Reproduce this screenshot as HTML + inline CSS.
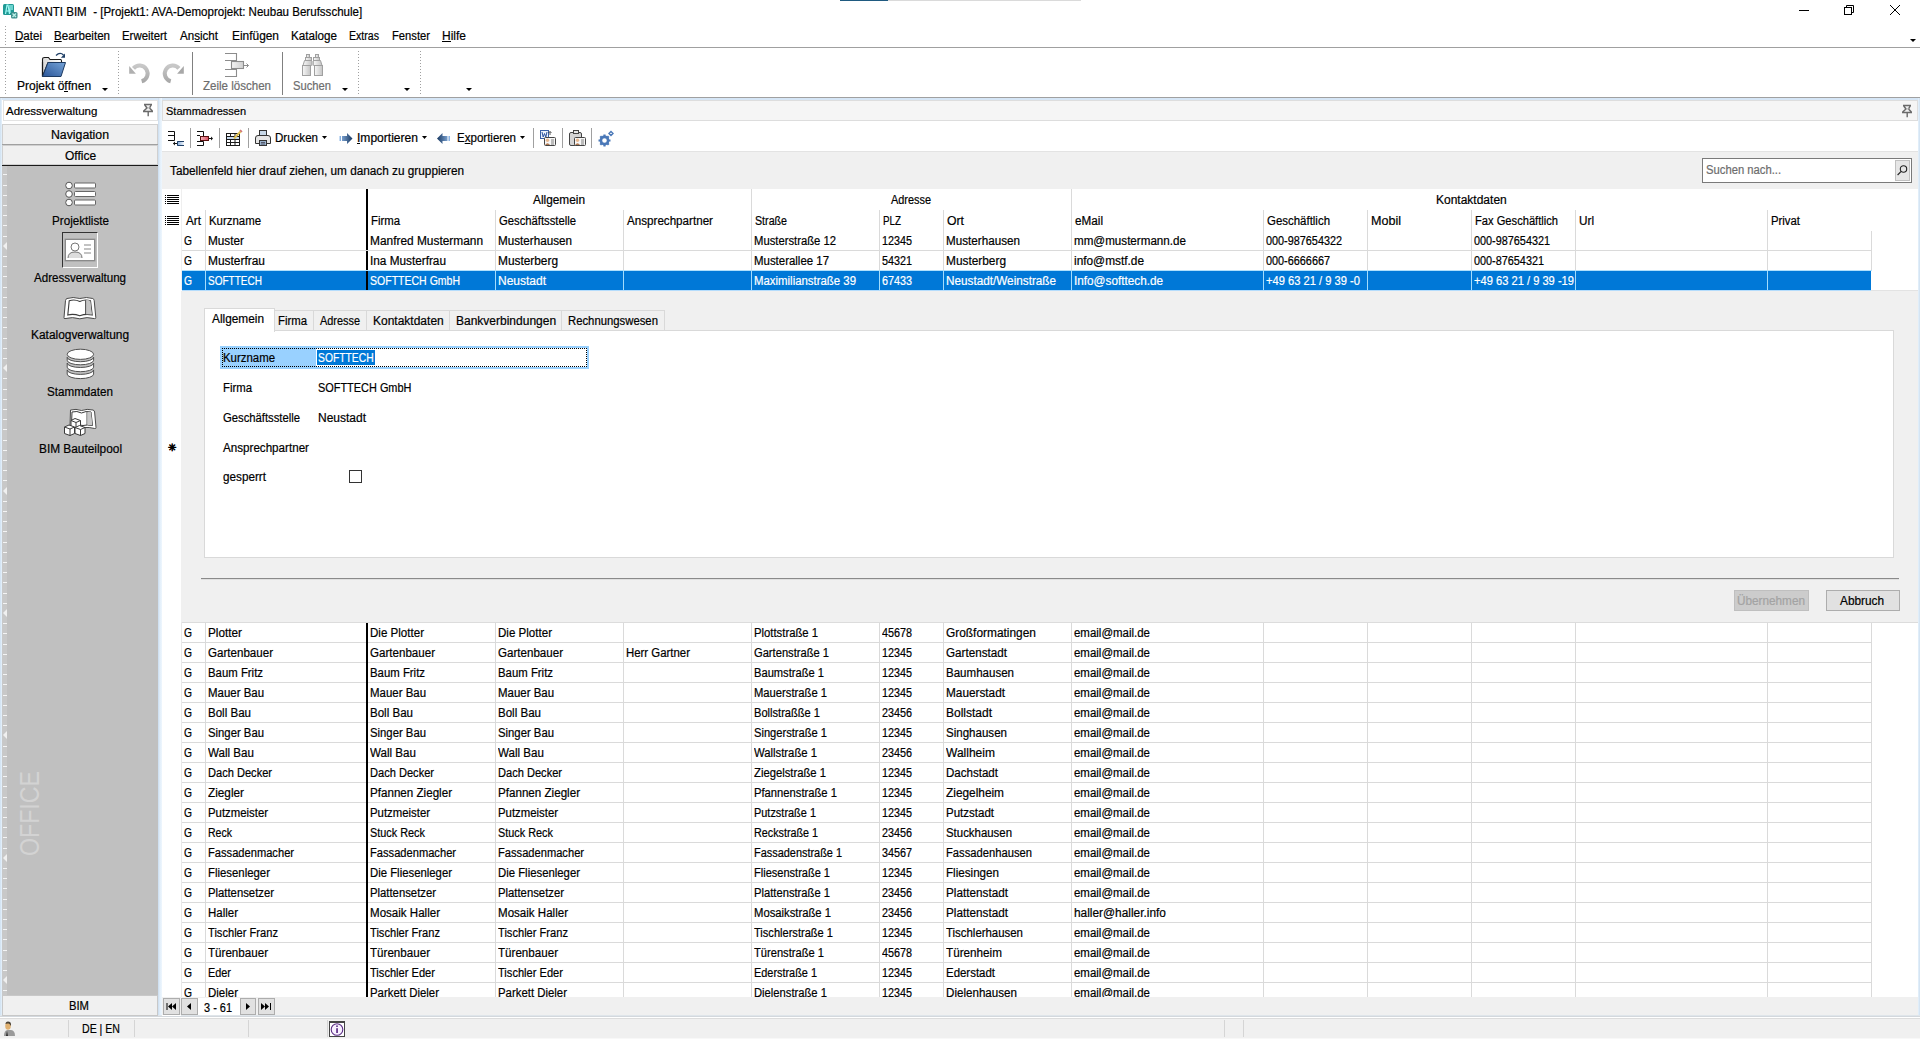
<!DOCTYPE html>
<html><head><meta charset="utf-8"><title>AVANTI BIM</title>
<style>
html,body{margin:0;padding:0;}
body{width:1920px;height:1039px;overflow:hidden;position:relative;background:#f0f0f0;font-family:"Liberation Sans",sans-serif;font-size:12px;color:#000;}
.r{position:absolute;}
.t{position:absolute;white-space:nowrap;line-height:1;-webkit-text-stroke-width:0.2px;}
.s{display:inline-block;transform-origin:0 0;}
u{text-decoration:none;position:relative;}
u::after{content:"";position:absolute;left:0;right:0;top:12px;height:1px;background:currentColor;}
</style></head><body>
<div class="r" style="left:0px;top:0px;width:1920px;height:98px;background:#fff;"></div>
<div class="r" style="left:0px;top:98px;width:1920px;height:2px;background:#d6e6f6;"></div>
<div class="r" style="left:0px;top:98px;width:2px;height:920px;background:linear-gradient(90deg,#cfe0f0,#e6f2fc);"></div>
<div class="r" style="left:158px;top:98px;width:4px;height:920px;background:linear-gradient(90deg,#cadcee,#e3effa 50%,#eef6fd);"></div>
<div class="r" style="left:1918px;top:98px;width:2px;height:920px;background:linear-gradient(90deg,#e6f2fc,#cfe0f0);"></div>
<div class="r" style="left:0px;top:1015px;width:1920px;height:1px;background:#dfe5ea;"></div>
<div class="r" style="left:840px;top:0px;width:48px;height:1px;background:#1f5a80;"></div>
<div class="r" style="left:888px;top:0px;width:193px;height:1px;background:#dadada;"></div>
<svg class="r" style="left:0px;top:0px" width="20" height="20" viewBox="0 0 20 20"><rect x="3" y="4" width="11" height="11" rx="1.5" fill="#1f9994"/><path d="M5.5 14L7 5H8L9.5 14M6 11H9M10 5V13M12 5V10" fill="none" stroke="#9ff8f4" stroke-width="1.2"/><rect x="11" y="12" width="6.5" height="6.5" rx="1.5" fill="#3f8f8c"/><path d="M12.5 13.5L16 17M16 13.5L12.5 17" stroke="#b8eee6" stroke-width="1.4"/></svg>
<div class="t" style="left:23px;top:6px;font-size:12px;color:#000;"><span class="s" style="transform:scaleX(0.962)">AVANTI BIM&nbsp; - [Projekt1: AVA-Demoprojekt: Neubau Berufsschule]</span></div>
<div class="r" style="left:1799px;top:10px;width:10px;height:1px;background:#000;"></div>
<svg class="r" style="left:1843px;top:4px" width="12" height="12" viewBox="0 0 12 12"><rect x="1.5" y="3.5" width="7" height="7" fill="none" stroke="#000" stroke-width="1"/><path d="M3.5 3.5V1.5H10.5V8.5H8.5" fill="none" stroke="#000" stroke-width="1"/></svg>
<svg class="r" style="left:1889px;top:4px" width="12" height="12" viewBox="0 0 12 12"><path d="M1 1L11 11M11 1L1 11" stroke="#000" stroke-width="1"/></svg>
<div class="r" style="left:5px;top:26px;width:1px;height:1px;background:#a0a0a0;"></div>
<div class="r" style="left:5px;top:29px;width:1px;height:1px;background:#a0a0a0;"></div>
<div class="r" style="left:5px;top:32px;width:1px;height:1px;background:#a0a0a0;"></div>
<div class="r" style="left:5px;top:35px;width:1px;height:1px;background:#a0a0a0;"></div>
<div class="r" style="left:5px;top:38px;width:1px;height:1px;background:#a0a0a0;"></div>
<div class="r" style="left:5px;top:41px;width:1px;height:1px;background:#a0a0a0;"></div>
<div class="r" style="left:5px;top:44px;width:1px;height:1px;background:#a0a0a0;"></div>
<div class="t" style="left:15px;top:30px;font-size:12px;color:#000;"><span class="s" style="transform:scaleX(0.964)"><u>D</u>atei</span></div>
<div class="t" style="left:54px;top:30px;font-size:12px;color:#000;"><span class="s" style="transform:scaleX(0.965)"><u>B</u>earbeiten</span></div>
<div class="t" style="left:122px;top:30px;font-size:12px;color:#000;"><span class="s" style="transform:scaleX(0.950)">Erweitert</span></div>
<div class="t" style="left:180px;top:30px;font-size:12px;color:#000;"><span class="s" style="transform:scaleX(0.966)">An<u>s</u>icht</span></div>
<div class="t" style="left:232px;top:30px;font-size:12px;color:#000;"><span class="s" style="transform:scaleX(0.992)">Einfügen</span></div>
<div class="t" style="left:291px;top:30px;font-size:12px;color:#000;"><span class="s" style="transform:scaleX(0.971)">Kataloge</span></div>
<div class="t" style="left:349px;top:30px;font-size:12px;color:#000;"><span class="s" style="transform:scaleX(0.882)">Extras</span></div>
<div class="t" style="left:392px;top:30px;font-size:12px;color:#000;"><span class="s" style="transform:scaleX(0.934)">Fenster</span></div>
<div class="t" style="left:442px;top:30px;font-size:12px;color:#000;"><u>H</u>ilfe</div>
<div class="r" style="left:0px;top:47px;width:1920px;height:1px;background:#a0a0a0;"></div>
<svg class="r" style="left:1910px;top:39px" width="7" height="5" viewBox="0 0 7 5"><path d="M0 0H6L3 3Z" fill="#000"/></svg>
<div class="r" style="left:0px;top:97px;width:1920px;height:1px;background:#a0a0a0;"></div>
<div class="r" style="left:5px;top:51px;width:1px;height:1px;background:#a0a0a0;"></div>
<div class="r" style="left:5px;top:54px;width:1px;height:1px;background:#a0a0a0;"></div>
<div class="r" style="left:5px;top:57px;width:1px;height:1px;background:#a0a0a0;"></div>
<div class="r" style="left:5px;top:60px;width:1px;height:1px;background:#a0a0a0;"></div>
<div class="r" style="left:5px;top:63px;width:1px;height:1px;background:#a0a0a0;"></div>
<div class="r" style="left:5px;top:66px;width:1px;height:1px;background:#a0a0a0;"></div>
<div class="r" style="left:5px;top:69px;width:1px;height:1px;background:#a0a0a0;"></div>
<div class="r" style="left:5px;top:72px;width:1px;height:1px;background:#a0a0a0;"></div>
<div class="r" style="left:5px;top:75px;width:1px;height:1px;background:#a0a0a0;"></div>
<div class="r" style="left:5px;top:78px;width:1px;height:1px;background:#a0a0a0;"></div>
<div class="r" style="left:5px;top:81px;width:1px;height:1px;background:#a0a0a0;"></div>
<div class="r" style="left:5px;top:84px;width:1px;height:1px;background:#a0a0a0;"></div>
<div class="r" style="left:5px;top:87px;width:1px;height:1px;background:#a0a0a0;"></div>
<div class="r" style="left:5px;top:90px;width:1px;height:1px;background:#a0a0a0;"></div>
<div class="r" style="left:5px;top:93px;width:1px;height:1px;background:#a0a0a0;"></div>
<svg class="r" style="left:36px;top:48px" width="40" height="32" viewBox="0 0 40 32"><defs><linearGradient id="fg1" x1="0" y1="1" x2="1" y2="0"><stop offset="0" stop-color="#2a5598"/><stop offset="1" stop-color="#76a4d8"/></linearGradient><linearGradient id="fg2" x1="0" x2="1"><stop offset="0" stop-color="#d8d8d8"/><stop offset="1" stop-color="#ffffff"/></linearGradient></defs><path d="M6.5 28.5V11Q6.5 9.5 8.5 9.5H12.5L14 11.5H24.5Q25.5 11.5 25.5 13V14.5H12Z" fill="url(#fg2)" stroke="#1a1a1a" stroke-width="1.1"/><path d="M6.5 14V28.5" stroke="#1a1a1a" stroke-width="1.2"/><path d="M12 14.5H29.5L25 28.5H6.5Z" fill="url(#fg1)" stroke="#1d3a62" stroke-width="1"/><path d="M20 7.5Q24 3.5 27.5 7" fill="none" stroke="#1f3f66" stroke-width="1.3"/><path d="M29 5.5V9.8H24.8Z" fill="#1f3f66"/></svg>
<div class="t" style="left:17px;top:80px;font-size:12px;color:#000;">Projekt ö<u>f</u>fnen</div>
<svg class="r" style="left:102px;top:88px" width="7" height="5" viewBox="0 0 7 5"><path d="M0 0H6L3 3Z" fill="#000"/></svg>
<div class="r" style="left:118px;top:51px;width:1px;height:1px;background:#a0a0a0;"></div>
<div class="r" style="left:118px;top:54px;width:1px;height:1px;background:#a0a0a0;"></div>
<div class="r" style="left:118px;top:57px;width:1px;height:1px;background:#a0a0a0;"></div>
<div class="r" style="left:118px;top:60px;width:1px;height:1px;background:#a0a0a0;"></div>
<div class="r" style="left:118px;top:63px;width:1px;height:1px;background:#a0a0a0;"></div>
<div class="r" style="left:118px;top:66px;width:1px;height:1px;background:#a0a0a0;"></div>
<div class="r" style="left:118px;top:69px;width:1px;height:1px;background:#a0a0a0;"></div>
<div class="r" style="left:118px;top:72px;width:1px;height:1px;background:#a0a0a0;"></div>
<div class="r" style="left:118px;top:75px;width:1px;height:1px;background:#a0a0a0;"></div>
<div class="r" style="left:118px;top:78px;width:1px;height:1px;background:#a0a0a0;"></div>
<div class="r" style="left:118px;top:81px;width:1px;height:1px;background:#a0a0a0;"></div>
<div class="r" style="left:118px;top:84px;width:1px;height:1px;background:#a0a0a0;"></div>
<div class="r" style="left:118px;top:87px;width:1px;height:1px;background:#a0a0a0;"></div>
<div class="r" style="left:118px;top:90px;width:1px;height:1px;background:#a0a0a0;"></div>
<div class="r" style="left:118px;top:93px;width:1px;height:1px;background:#a0a0a0;"></div>
<svg class="r" style="left:124px;top:58px" width="66" height="32" viewBox="0 0 66 32"><defs><linearGradient id="ug" x1="0" y1="0" x2="0" y2="1"><stop offset="0" stop-color="#c8c8c8"/><stop offset="1" stop-color="#a9a9a9"/></linearGradient></defs><path d="M9.47 10.36A8 8 0 1 1 17.67 23.23" fill="none" stroke="url(#ug)" stroke-width="4"/><path d="M5.2 8.1V15.8H11.9Z" fill="#b0b0b0"/><path d="M54.93 10.36A8 8 0 1 0 46.73 23.23" fill="none" stroke="url(#ug)" stroke-width="4"/><path d="M59.8 8.1V15.8H53.1Z" fill="#a8a8a8"/></svg>
<div class="r" style="left:192px;top:52px;width:1px;height:43px;background:#808080;"></div>
<svg class="r" style="left:218px;top:50px" width="40" height="30" viewBox="0 0 40 30"><defs><linearGradient id="zg" x1="0" x2="1"><stop offset="0" stop-color="#f4f4f4"/><stop offset="1" stop-color="#cfcfcf"/></linearGradient></defs><path d="M7 3.5H18.5V10.5H7M7 19.5H18.5V26.5H7" fill="none" stroke="#8c8c8c" stroke-width="1.1"/><rect x="13.5" y="11.5" width="12" height="7" fill="url(#zg)" stroke="#8c8c8c" stroke-width="1.1"/><path d="M26 15.5H30.5M28.5 13.5L30.5 15.5L28.5 17.5" fill="none" stroke="#8c8c8c" stroke-width="1"/></svg>
<div class="t" style="left:203px;top:80px;font-size:12px;color:#6d6d6d;"><span class="s" style="transform:scaleX(0.962)">Zeile löschen</span></div>
<div class="r" style="left:282px;top:52px;width:1px;height:43px;background:#808080;"></div>
<svg class="r" style="left:296px;top:50px" width="32" height="30" viewBox="0 0 32 30"><defs><linearGradient id="bn" x1="0" x2="1"><stop offset="0" stop-color="#f8f8f8"/><stop offset="1" stop-color="#c4c4c4"/></linearGradient></defs><g fill="url(#bn)" stroke="#a0a0a0" stroke-width="1"><rect x="6.5" y="15.5" width="8" height="10"/><path d="M7 15.5L8.5 10.5H15.5V15.5Z"/><rect x="9.5" y="7.5" width="6" height="3"/><rect x="10.5" y="4.5" width="3" height="3"/><rect x="18.5" y="15.5" width="8" height="10"/><path d="M26 15.5L24.5 10.5H17.5V15.5Z"/><rect x="17.5" y="7.5" width="6" height="3"/><rect x="19.5" y="4.5" width="3" height="3"/></g><rect x="15.5" y="11" width="2" height="4.5" fill="#c8c8c8"/></svg>
<div class="t" style="left:293px;top:80px;font-size:12px;color:#6d6d6d;"><span class="s" style="transform:scaleX(0.934)">Suchen</span></div>
<svg class="r" style="left:342px;top:88px" width="7" height="5" viewBox="0 0 7 5"><path d="M0 0H6L3 3Z" fill="#000"/></svg>
<div class="r" style="left:358px;top:51px;width:1px;height:1px;background:#a0a0a0;"></div>
<div class="r" style="left:358px;top:54px;width:1px;height:1px;background:#a0a0a0;"></div>
<div class="r" style="left:358px;top:57px;width:1px;height:1px;background:#a0a0a0;"></div>
<div class="r" style="left:358px;top:60px;width:1px;height:1px;background:#a0a0a0;"></div>
<div class="r" style="left:358px;top:63px;width:1px;height:1px;background:#a0a0a0;"></div>
<div class="r" style="left:358px;top:66px;width:1px;height:1px;background:#a0a0a0;"></div>
<div class="r" style="left:358px;top:69px;width:1px;height:1px;background:#a0a0a0;"></div>
<div class="r" style="left:358px;top:72px;width:1px;height:1px;background:#a0a0a0;"></div>
<div class="r" style="left:358px;top:75px;width:1px;height:1px;background:#a0a0a0;"></div>
<div class="r" style="left:358px;top:78px;width:1px;height:1px;background:#a0a0a0;"></div>
<div class="r" style="left:358px;top:81px;width:1px;height:1px;background:#a0a0a0;"></div>
<div class="r" style="left:358px;top:84px;width:1px;height:1px;background:#a0a0a0;"></div>
<div class="r" style="left:358px;top:87px;width:1px;height:1px;background:#a0a0a0;"></div>
<div class="r" style="left:358px;top:90px;width:1px;height:1px;background:#a0a0a0;"></div>
<div class="r" style="left:358px;top:93px;width:1px;height:1px;background:#a0a0a0;"></div>
<svg class="r" style="left:404px;top:88px" width="7" height="5" viewBox="0 0 7 5"><path d="M0 0H6L3 3Z" fill="#000"/></svg>
<div class="r" style="left:420px;top:51px;width:1px;height:1px;background:#a0a0a0;"></div>
<div class="r" style="left:420px;top:54px;width:1px;height:1px;background:#a0a0a0;"></div>
<div class="r" style="left:420px;top:57px;width:1px;height:1px;background:#a0a0a0;"></div>
<div class="r" style="left:420px;top:60px;width:1px;height:1px;background:#a0a0a0;"></div>
<div class="r" style="left:420px;top:63px;width:1px;height:1px;background:#a0a0a0;"></div>
<div class="r" style="left:420px;top:66px;width:1px;height:1px;background:#a0a0a0;"></div>
<div class="r" style="left:420px;top:69px;width:1px;height:1px;background:#a0a0a0;"></div>
<div class="r" style="left:420px;top:72px;width:1px;height:1px;background:#a0a0a0;"></div>
<div class="r" style="left:420px;top:75px;width:1px;height:1px;background:#a0a0a0;"></div>
<div class="r" style="left:420px;top:78px;width:1px;height:1px;background:#a0a0a0;"></div>
<div class="r" style="left:420px;top:81px;width:1px;height:1px;background:#a0a0a0;"></div>
<div class="r" style="left:420px;top:84px;width:1px;height:1px;background:#a0a0a0;"></div>
<div class="r" style="left:420px;top:87px;width:1px;height:1px;background:#a0a0a0;"></div>
<div class="r" style="left:420px;top:90px;width:1px;height:1px;background:#a0a0a0;"></div>
<div class="r" style="left:420px;top:93px;width:1px;height:1px;background:#a0a0a0;"></div>
<svg class="r" style="left:466px;top:88px" width="7" height="5" viewBox="0 0 7 5"><path d="M0 0H6L3 3Z" fill="#000"/></svg>
<div class="r" style="left:2px;top:100px;width:156px;height:915px;background:#fff;"></div>
<div class="r" style="left:3px;top:100px;width:155px;height:21px;background:#fff;border:1px solid #e3e3e3;box-sizing:border-box;"></div>
<div class="t" style="left:6px;top:106px;font-size:11.5px;color:#000;">Adressverwaltung</div>
<svg class="r" style="left:141px;top:103px" width="14" height="14" viewBox="0 0 14 14"><path d="M4 2H10L8.8 5L11 8H3L5.2 5Z" fill="#f2f2f2"/><path d="M3 1.6H11M3.8 2L6 5L2.6 8M10.2 2L8.5 5L11.4 8M2 8.6H12" fill="none" stroke="#6a6a6a" stroke-width="1.5" stroke-linejoin="round"/><path d="M7.2 9V13.2" stroke="#6a6a6a" stroke-width="1.4"/><circle cx="8.5" cy="4.8" r="1" fill="#999"/></svg>
<div class="r" style="left:2px;top:124px;width:156px;height:21px;background:#f0f0f0;border:1px solid #d0d0d0;box-sizing:border-box;"></div>
<div class="r" style="left:2px;top:144px;width:156px;height:1px;background:#a0a0a0;"></div>
<div class="t" style="left:51px;top:129px;font-size:12px;color:#000;"><span class="s" style="transform:scaleX(1.023)">Navigation</span></div>
<div class="r" style="left:2px;top:145px;width:156px;height:20px;background:#f0f0f0;border:1px solid #d0d0d0;box-sizing:border-box;"></div>
<div class="r" style="left:2px;top:165px;width:156px;height:1px;background:#1a1a1a;"></div>
<div class="t" style="left:65px;top:150px;font-size:12px;color:#000;">Office</div>
<div class="r" style="left:2px;top:166px;width:156px;height:829px;background:#c0c0c0;"></div>
<div class="r" style="left:2px;top:166px;width:5px;height:829px;background:#c8c8c8;"></div>
<div class="r" style="left:3px;top:174px;width:4px;height:1px;background:#f4f4f4;"></div>
<div class="r" style="left:3px;top:185px;width:4px;height:1px;background:#f4f4f4;"></div>
<div class="r" style="left:3px;top:195px;width:4px;height:1px;background:#f4f4f4;"></div>
<div class="r" style="left:3px;top:205px;width:4px;height:1px;background:#f4f4f4;"></div>
<div class="r" style="left:3px;top:215px;width:4px;height:1px;background:#f4f4f4;"></div>
<div class="r" style="left:3px;top:225px;width:4px;height:1px;background:#f4f4f4;"></div>
<div class="r" style="left:3px;top:236px;width:4px;height:1px;background:#f4f4f4;"></div>
<svg class="r" style="left:3px;top:242px" width="5" height="9" viewBox="0 0 5 9"><path d="M4 0V8L0 4Z" fill="#f0f0f0"/></svg>
<div class="r" style="left:3px;top:256px;width:4px;height:1px;background:#f4f4f4;"></div>
<div class="r" style="left:3px;top:266px;width:4px;height:1px;background:#f4f4f4;"></div>
<div class="r" style="left:3px;top:276px;width:4px;height:1px;background:#f4f4f4;"></div>
<div class="r" style="left:3px;top:287px;width:4px;height:1px;background:#f4f4f4;"></div>
<div class="r" style="left:3px;top:297px;width:4px;height:1px;background:#f4f4f4;"></div>
<div class="r" style="left:3px;top:307px;width:4px;height:1px;background:#f4f4f4;"></div>
<div class="r" style="left:3px;top:317px;width:4px;height:1px;background:#f4f4f4;"></div>
<div class="r" style="left:3px;top:327px;width:4px;height:1px;background:#f4f4f4;"></div>
<div class="r" style="left:3px;top:338px;width:4px;height:1px;background:#f4f4f4;"></div>
<div class="r" style="left:3px;top:348px;width:4px;height:1px;background:#f4f4f4;"></div>
<div class="r" style="left:3px;top:358px;width:4px;height:1px;background:#f4f4f4;"></div>
<svg class="r" style="left:3px;top:364px" width="5" height="9" viewBox="0 0 5 9"><path d="M4 0V8L0 4Z" fill="#f0f0f0"/></svg>
<div class="r" style="left:3px;top:378px;width:4px;height:1px;background:#f4f4f4;"></div>
<div class="r" style="left:3px;top:389px;width:4px;height:1px;background:#f4f4f4;"></div>
<div class="r" style="left:3px;top:399px;width:4px;height:1px;background:#f4f4f4;"></div>
<div class="r" style="left:3px;top:409px;width:4px;height:1px;background:#f4f4f4;"></div>
<div class="r" style="left:3px;top:419px;width:4px;height:1px;background:#f4f4f4;"></div>
<div class="r" style="left:3px;top:429px;width:4px;height:1px;background:#f4f4f4;"></div>
<div class="r" style="left:3px;top:440px;width:4px;height:1px;background:#f4f4f4;"></div>
<div class="r" style="left:3px;top:450px;width:4px;height:1px;background:#f4f4f4;"></div>
<div class="r" style="left:3px;top:460px;width:4px;height:1px;background:#f4f4f4;"></div>
<div class="r" style="left:3px;top:470px;width:4px;height:1px;background:#f4f4f4;"></div>
<div class="r" style="left:3px;top:480px;width:4px;height:1px;background:#f4f4f4;"></div>
<svg class="r" style="left:3px;top:487px" width="5" height="9" viewBox="0 0 5 9"><path d="M4 0V8L0 4Z" fill="#f0f0f0"/></svg>
<div class="r" style="left:3px;top:501px;width:4px;height:1px;background:#f4f4f4;"></div>
<div class="r" style="left:3px;top:511px;width:4px;height:1px;background:#f4f4f4;"></div>
<div class="r" style="left:3px;top:521px;width:4px;height:1px;background:#f4f4f4;"></div>
<div class="r" style="left:3px;top:531px;width:4px;height:1px;background:#f4f4f4;"></div>
<div class="r" style="left:3px;top:542px;width:4px;height:1px;background:#f4f4f4;"></div>
<div class="r" style="left:3px;top:552px;width:4px;height:1px;background:#f4f4f4;"></div>
<div class="r" style="left:3px;top:562px;width:4px;height:1px;background:#f4f4f4;"></div>
<div class="r" style="left:3px;top:572px;width:4px;height:1px;background:#f4f4f4;"></div>
<div class="r" style="left:3px;top:582px;width:4px;height:1px;background:#f4f4f4;"></div>
<div class="r" style="left:3px;top:593px;width:4px;height:1px;background:#f4f4f4;"></div>
<div class="r" style="left:3px;top:603px;width:4px;height:1px;background:#f4f4f4;"></div>
<svg class="r" style="left:3px;top:609px" width="5" height="9" viewBox="0 0 5 9"><path d="M4 0V8L0 4Z" fill="#f0f0f0"/></svg>
<div class="r" style="left:3px;top:623px;width:4px;height:1px;background:#f4f4f4;"></div>
<div class="r" style="left:3px;top:633px;width:4px;height:1px;background:#f4f4f4;"></div>
<div class="r" style="left:3px;top:644px;width:4px;height:1px;background:#f4f4f4;"></div>
<div class="r" style="left:3px;top:654px;width:4px;height:1px;background:#f4f4f4;"></div>
<div class="r" style="left:3px;top:664px;width:4px;height:1px;background:#f4f4f4;"></div>
<div class="r" style="left:3px;top:674px;width:4px;height:1px;background:#f4f4f4;"></div>
<div class="r" style="left:3px;top:684px;width:4px;height:1px;background:#f4f4f4;"></div>
<div class="r" style="left:3px;top:695px;width:4px;height:1px;background:#f4f4f4;"></div>
<div class="r" style="left:3px;top:705px;width:4px;height:1px;background:#f4f4f4;"></div>
<div class="r" style="left:3px;top:715px;width:4px;height:1px;background:#f4f4f4;"></div>
<div class="r" style="left:3px;top:725px;width:4px;height:1px;background:#f4f4f4;"></div>
<svg class="r" style="left:3px;top:731px" width="5" height="9" viewBox="0 0 5 9"><path d="M4 0V8L0 4Z" fill="#f0f0f0"/></svg>
<div class="r" style="left:3px;top:746px;width:4px;height:1px;background:#f4f4f4;"></div>
<div class="r" style="left:3px;top:756px;width:4px;height:1px;background:#f4f4f4;"></div>
<div class="r" style="left:3px;top:766px;width:4px;height:1px;background:#f4f4f4;"></div>
<div class="r" style="left:3px;top:776px;width:4px;height:1px;background:#f4f4f4;"></div>
<div class="r" style="left:3px;top:786px;width:4px;height:1px;background:#f4f4f4;"></div>
<div class="r" style="left:3px;top:797px;width:4px;height:1px;background:#f4f4f4;"></div>
<div class="r" style="left:3px;top:807px;width:4px;height:1px;background:#f4f4f4;"></div>
<div class="r" style="left:3px;top:817px;width:4px;height:1px;background:#f4f4f4;"></div>
<div class="r" style="left:3px;top:827px;width:4px;height:1px;background:#f4f4f4;"></div>
<div class="r" style="left:3px;top:837px;width:4px;height:1px;background:#f4f4f4;"></div>
<div class="r" style="left:3px;top:848px;width:4px;height:1px;background:#f4f4f4;"></div>
<svg class="r" style="left:3px;top:854px" width="5" height="9" viewBox="0 0 5 9"><path d="M4 0V8L0 4Z" fill="#f0f0f0"/></svg>
<div class="r" style="left:3px;top:868px;width:4px;height:1px;background:#f4f4f4;"></div>
<div class="r" style="left:3px;top:878px;width:4px;height:1px;background:#f4f4f4;"></div>
<div class="r" style="left:3px;top:888px;width:4px;height:1px;background:#f4f4f4;"></div>
<div class="r" style="left:3px;top:899px;width:4px;height:1px;background:#f4f4f4;"></div>
<div class="r" style="left:3px;top:909px;width:4px;height:1px;background:#f4f4f4;"></div>
<div class="r" style="left:3px;top:919px;width:4px;height:1px;background:#f4f4f4;"></div>
<div class="r" style="left:3px;top:929px;width:4px;height:1px;background:#f4f4f4;"></div>
<div class="r" style="left:3px;top:939px;width:4px;height:1px;background:#f4f4f4;"></div>
<div class="r" style="left:3px;top:950px;width:4px;height:1px;background:#f4f4f4;"></div>
<div class="r" style="left:3px;top:960px;width:4px;height:1px;background:#f4f4f4;"></div>
<div class="r" style="left:3px;top:970px;width:4px;height:1px;background:#f4f4f4;"></div>
<svg class="r" style="left:3px;top:976px" width="5" height="9" viewBox="0 0 5 9"><path d="M4 0V8L0 4Z" fill="#f0f0f0"/></svg>
<div class="r" style="left:3px;top:990px;width:4px;height:1px;background:#f4f4f4;"></div>
<div class="t" style="left:-19px;top:800px;width:99px;height:27px;font-size:27px;color:#d3d3d3;transform:rotate(-90deg) scaleX(0.86);transform-origin:50% 50%;-webkit-text-stroke-width:0;">OFFICE</div>
<svg class="r" style="left:64px;top:181px" width="34" height="26" viewBox="0 0 34 26"><circle cx="5" cy="4.5" r="3.3" fill="#fff" stroke="#555" stroke-width="1"/><rect x="10.5" y="2.0" width="21" height="5" rx="1" fill="#fff" stroke="#666" stroke-width="1"/><circle cx="5" cy="13" r="3.3" fill="#fff" stroke="#555" stroke-width="1"/><rect x="10.5" y="10.5" width="21" height="5" rx="1" fill="#fff" stroke="#666" stroke-width="1"/><circle cx="5" cy="21.5" r="3.3" fill="#fff" stroke="#555" stroke-width="1"/><rect x="10.5" y="19.0" width="21" height="5" rx="1" fill="#fff" stroke="#666" stroke-width="1"/></svg>
<div class="t" style="left:52px;top:215px;font-size:12px;color:#000;"><span class="s" style="transform:scaleX(0.971)">Projektliste</span></div>
<div class="r" style="left:62px;top:232px;width:36px;height:36px;background:#c0c0c0;border-top:1px solid #333;border-left:1px solid #333;border-bottom:1px solid #fff;border-right:1px solid #fff;box-sizing:border-box;"></div>
<svg class="r" style="left:64px;top:238px" width="32" height="25" viewBox="0 0 32 25"><rect x="0.5" y="0.5" width="31" height="23" fill="#9a9a9a"/><rect x="1.5" y="1.5" width="29" height="21" fill="#fff" stroke="#8a8a8a"/><circle cx="11" cy="9" r="4" fill="#fff" stroke="#777"/><path d="M4 20q0-6 7-6t7 6" fill="#ddd" stroke="#777"/><path d="M20 7H27M20 11H27M20 15H27" stroke="#888" stroke-width="1.2"/></svg>
<div class="t" style="left:34px;top:272px;font-size:12px;color:#000;"><span class="s" style="transform:scaleX(0.965)">Adressverwaltung</span></div>
<svg class="r" style="left:56px;top:290px" width="48" height="32" viewBox="0 0 48 32"><path d="M11 8.5Q17 6.5 23.8 8.5Q30.5 6.5 36.8 8.5Q38 9 38.2 10.5L39.8 27.5Q40 28.8 38.5 28.6Q31 26.5 23.8 28.8Q16.5 26.5 9 28.6Q7.7 28.8 8 27.5L9.5 10.5Q9.7 9 11 8.5Z" fill="#fff" stroke="#4a4a4a" stroke-width="1"/><path d="M13.2 10.8Q18.5 8.8 23.8 11.5Q29 8.8 34.5 10.8L36.2 25Q30 23.5 23.8 25.8Q17.5 23.5 11.8 25Z" fill="#fff" stroke="#3a3a3a" stroke-width="1.1"/><path d="M29.8 10.3Q32 9.7 34.3 11L35.9 24.6Q33 24 30 24.2Z" fill="#c4c4c4"/><path d="M29.6 10.2V24.3" stroke="#4a4a4a" stroke-width="1"/></svg>
<div class="t" style="left:31px;top:329px;font-size:12px;color:#000;"><span class="s" style="transform:scaleX(0.993)">Katalogverwaltung</span></div>
<svg class="r" style="left:56px;top:344px" width="48" height="40" viewBox="0 0 48 40"><path d="M11.2 25.9 A13.2 4.5 0 0 0 37.6 25.9 L37.6 30.1 A13.2 4.5 0 0 1 11.2 30.1 Z" fill="#fff" stroke="#505050" stroke-width="1"/><path d="M11.2 19.0 A13.2 4.5 0 0 0 37.6 19.0 L37.6 23.2 A13.2 4.5 0 0 1 11.2 23.2 Z" fill="#fff" stroke="#505050" stroke-width="1"/><path d="M11.2 13.2 A13.2 4.5 0 0 0 37.6 13.2 L37.6 16.3 A13.2 4.5 0 0 1 11.2 16.3 Z" fill="#fff" stroke="#505050" stroke-width="1"/><ellipse cx="24.4" cy="10.3" rx="13.2" ry="5.1" fill="#fff" stroke="#505050" stroke-width="1"/></svg>
<div class="t" style="left:47px;top:386px;font-size:12px;color:#000;"><span class="s" style="transform:scaleX(0.970)">Stammdaten</span></div>
<svg class="r" style="left:56px;top:402px" width="48" height="40" viewBox="0 0 48 40"><path d="M14.5 8Q20 6.5 25.5 8.5Q31 6.5 37 8Q38.5 8.5 38.6 10L40 25.5Q40.2 26.8 38.7 26.5Q33 25 28 25.5L14 24Z" fill="#fff" stroke="#4a4a4a" stroke-width="1"/><path d="M16 10Q21 8.5 25.5 11Q30 8.5 35 10L36.5 23.5Q31 22.5 27 23.5L15.5 22Z" fill="#fff" stroke="#3a3a3a" stroke-width="1"/><path d="M31 10V23" stroke="#4a4a4a"/><path d="M31.5 10.2Q33.5 9.7 35 10.3L36.3 23.2Q34 22.8 31.5 23Z" fill="#c8c8c8"/><g fill="#fff" stroke="#3a3a3a" stroke-width="1" stroke-linejoin="round"><path d="M15 18.5L19 16.5L24.5 18.5V25L20 27L15 25Z"/><path d="M15 18.5L20 20.5L24.5 18.5M20 20.5V27" fill="none"/><path d="M8.5 25L13 23L18.5 25V31.5L14 33.5L8.5 31.5Z"/><path d="M8.5 25L14 27L18.5 25M14 27V33.5" fill="none"/><path d="M19 25.5L23.5 23.5L29 25.5V31.5L24.5 33.5L19 31.5Z"/><path d="M19 25.5L24.5 27.5L29 25.5M24.5 27.5V33.5" fill="none"/></g></svg>
<div class="t" style="left:39px;top:443px;font-size:12px;color:#000;"><span class="s" style="transform:scaleX(0.988)">BIM Bauteilpool</span></div>
<div class="r" style="left:2px;top:995px;width:156px;height:21px;background:#f0f0f0;border:1px solid #c8c8c8;box-sizing:border-box;"></div>
<div class="t" style="left:69px;top:1000px;font-size:12px;color:#000;"><span class="s" style="transform:scaleX(0.937)">BIM</span></div>
<div class="r" style="left:162px;top:100px;width:1756px;height:915px;background:#f0f0f0;"></div>
<div class="r" style="left:162px;top:100px;width:1756px;height:21px;background:#f5f5f5;border:1px solid #dddddd;box-sizing:border-box;"></div>
<div class="t" style="left:166px;top:106px;font-size:11px;color:#000;">Stammadressen</div>
<svg class="r" style="left:1900px;top:104px" width="14" height="14" viewBox="0 0 14 14"><path d="M4 2H10L8.8 5L11 8H3L5.2 5Z" fill="#f2f2f2"/><path d="M3 1.6H11M3.8 2L6 5L2.6 8M10.2 2L8.5 5L11.4 8M2 8.6H12" fill="none" stroke="#6a6a6a" stroke-width="1.5" stroke-linejoin="round"/><path d="M7.2 9V13.2" stroke="#6a6a6a" stroke-width="1.4"/><circle cx="8.5" cy="4.8" r="1" fill="#999"/></svg>
<div class="r" style="left:162px;top:121px;width:1756px;height:30px;background:#fff;"></div>
<div class="r" style="left:162px;top:151px;width:1756px;height:1px;background:#e3e3e3;"></div>
<svg class="r" style="left:164px;top:126px" width="90" height="24" viewBox="0 0 90 24"><defs><linearGradient id="bg1" x1="0" x2="1"><stop offset="0" stop-color="#7ea6d8"/><stop offset="1" stop-color="#f4f8fc"/></linearGradient><linearGradient id="rg1" x1="0" x2="1"><stop offset="0" stop-color="#f6b8c0"/><stop offset="1" stop-color="#d84a5a"/></linearGradient></defs><path d="M4 5.5H10.5V14.5H4M4 9.5H10.5" fill="none" stroke="#111" stroke-width="1"/><rect x="13" y="15" width="7" height="5" fill="url(#bg1)"/><path d="M20 15.5H13.5V19.5H20" fill="none" stroke="#1f3f66" stroke-width="1"/><path d="M9.5 17.5H13" stroke="#111" stroke-width="1"/><path d="M9 17.5L11 15.5V19.5Z" fill="#111"/><path d="M33 5.5H39.5V10M33 9.5H36M33 15.5H39.5V19.5H33" fill="none" stroke="#111" stroke-width="1"/><rect x="36.5" y="10.5" width="8" height="4" fill="url(#rg1)" stroke="#5a1010" stroke-width="1"/><path d="M45 12.5H48" stroke="#111" stroke-width="1"/><path d="M49 12.5L47 10.5V14.5Z" fill="#111"/><g fill="none" stroke="#1a1a1a" stroke-width="1"><rect x="62.5" y="7.5" width="13" height="12"/><path d="M62.5 10.5H75.5M62.5 13.5H75.5M62.5 16.5H75.5M66.5 7.5V19.5M71 7.5V19.5"/></g><rect x="63" y="11" width="12" height="2" fill="#c8daf0"/><path d="M70 12.5L77.5 4.5" stroke="#e0c050" stroke-width="2"/><path d="M76 4L78 6" stroke="#d07080" stroke-width="1.5"/></svg>
<div class="r" style="left:190px;top:128px;width:1px;height:20px;background:#a0a0a0;"></div>
<div class="r" style="left:219px;top:128px;width:1px;height:20px;background:#a0a0a0;"></div>
<div class="r" style="left:248px;top:128px;width:1px;height:20px;background:#a0a0a0;"></div>
<svg class="r" style="left:250px;top:126px" width="110" height="24" viewBox="0 0 110 24"><defs><linearGradient id="ar1" x1="0" x2="1"><stop offset="0" stop-color="#8fb8e8"/><stop offset="1" stop-color="#16365f"/></linearGradient><linearGradient id="ar2" x1="1" x2="0"><stop offset="0" stop-color="#8fb8e8"/><stop offset="1" stop-color="#16365f"/></linearGradient></defs><rect x="9.5" y="4.5" width="7" height="6" fill="#c6d6e6" stroke="#333" stroke-width="1"/><path d="M5.5 17.5V12Q5.5 9.5 8 9.5H18Q20.5 9.5 20.5 12V17.5H16.5V14.5H9.5V17.5Z" fill="#e6e6e6" stroke="#333" stroke-width="1"/><rect x="9.5" y="14.5" width="7" height="5" fill="#9ab2cc" stroke="#333" stroke-width="1"/><path d="M11 16.5H15M11 18H15" stroke="#445" stroke-width="0.8"/><path d="M89.5 10H91V15H89.5ZM92 10H97V7L102.5 12.5L97 18V15H92Z" fill="url(#ar1)"/></svg>
<div class="t" style="left:275px;top:132px;font-size:12px;color:#000;"><span class="s" style="transform:scaleX(0.962)">Drucken</span></div>
<svg class="r" style="left:322px;top:136px" width="6" height="4" viewBox="0 0 6 4"><path d="M0 0H5L2.5 3Z" fill="#000"/></svg>
<div class="t" style="left:357px;top:132px;font-size:12px;color:#000;"><span class="s" style="transform:scaleX(1.005)"><u>I</u>mportieren</span></div>
<svg class="r" style="left:422px;top:136px" width="6" height="4" viewBox="0 0 6 4"><path d="M0 0H5L2.5 3Z" fill="#000"/></svg>
<svg class="r" style="left:430px;top:126px" width="190" height="24" viewBox="0 0 190 24"><defs><linearGradient id="ar3" x1="1" x2="0"><stop offset="0" stop-color="#8fb8e8"/><stop offset="1" stop-color="#16365f"/></linearGradient></defs><path d="M20 10H18.5V15H20ZM17.5 10H12.5V7L7 12.5L12.5 18V15H17.5Z" fill="url(#ar3)"/><rect x="110.5" y="4.5" width="8" height="8" fill="#eef3fb" stroke="#3b62a8" stroke-width="1"/><path d="M112 6L113.2 11L114.5 7.5L115.8 11L117 6" fill="none" stroke="#2a52a0" stroke-width="1"/><path d="M120 9V5.5M118.5 7L120 5.5L121.5 7" fill="none" stroke="#333" stroke-width="0.8"/><rect x="114.5" y="11.5" width="11" height="8" rx="1" fill="#f6f6f6" stroke="#444" stroke-width="1"/><circle cx="117.5" cy="14.3" r="1.7" fill="#e8b890"/><path d="M115 19Q117.5 15.5 120 19Z" fill="#b07850"/><path d="M121 14H124M121 16H124M121 18H124" stroke="#666" stroke-width="0.8"/><rect x="139.5" y="6.5" width="12" height="13" rx="1.5" fill="#d4d4d4" stroke="#444" stroke-width="1"/><rect x="143.5" y="4.5" width="5" height="3" fill="#e6e6e6" stroke="#444" stroke-width="1"/><rect x="144.5" y="11.5" width="11" height="8" rx="1" fill="#f6f6f6" stroke="#444" stroke-width="1"/><circle cx="147.5" cy="14.3" r="1.7" fill="#e8b890"/><path d="M145 19Q147.5 15.5 150 19Z" fill="#b07850"/><path d="M151 14H154M151 16H154M151 18H154" stroke="#666" stroke-width="0.8"/><g transform="translate(174.5 14.5)"><circle r="3.6" fill="none" stroke="#4a78b8" stroke-width="2.6"/><path d="M0 -6V-4M0 4V6M-6 0H-4M4 0H6M-4.2 -4.2L-2.8 -2.8M2.8 2.8L4.2 4.2M-4.2 4.2L-2.8 2.8M2.8 -2.8L4.2 -4.2" stroke="#4a78b8" stroke-width="2.2"/></g><path d="M181 5.5L183 7.5L181 9.5L179 7.5Z" fill="none" stroke="#4a78b8" stroke-width="1.4"/></svg>
<div class="t" style="left:457px;top:132px;font-size:12px;color:#000;"><span class="s" style="transform:scaleX(0.961)">E<u>x</u>portieren</span></div>
<svg class="r" style="left:520px;top:136px" width="6" height="4" viewBox="0 0 6 4"><path d="M0 0H5L2.5 3Z" fill="#000"/></svg>
<div class="r" style="left:533px;top:128px;width:1px;height:20px;background:#a0a0a0;"></div>
<div class="r" style="left:562px;top:128px;width:1px;height:20px;background:#a0a0a0;"></div>
<div class="r" style="left:591px;top:128px;width:1px;height:20px;background:#a0a0a0;"></div>
<div class="r" style="left:162px;top:152px;width:1756px;height:37px;background:#f0f0f0;"></div>
<div class="t" style="left:170px;top:165px;font-size:12px;color:#000;"><span class="s" style="transform:scaleX(0.982)">Tabellenfeld hier drauf ziehen, um danach zu gruppieren</span></div>
<div class="r" style="left:1702px;top:158px;width:211px;height:25px;background:#fff;border:1px solid #7a7a7a;box-sizing:border-box;width:210px;"></div>
<div class="t" style="left:1706px;top:164px;font-size:12px;color:#6d6d6d;"><span class="s" style="transform:scaleX(0.937)">Suchen nach...</span></div>
<div class="r" style="left:1895px;top:160px;width:15px;height:21px;background:#e6e6e6;border:1px solid #c0c0c0;box-sizing:border-box;"></div>
<svg class="r" style="left:1896px;top:163px" width="13" height="14" viewBox="0 0 13 14"><circle cx="7.5" cy="6" r="3.2" fill="none" stroke="#222" stroke-width="1.1"/><path d="M5.2 8.4L1.6 12" stroke="#222" stroke-width="1.1"/></svg>
<div class="r" style="left:162px;top:189px;width:1756px;height:102px;background:#fff;"></div>
<div class="r" style="left:182px;top:290px;width:1736px;height:1px;background:#e3e3e3;"></div>
<div class="r" style="left:182px;top:290px;width:1689px;height:1px;background:#b4dcfc;"></div>
<div class="r" style="left:181px;top:189px;width:1px;height:101px;background:#efefef;"></div>
<div class="r" style="left:165px;top:195px;width:1px;height:1px;background:#000;"></div>
<div class="r" style="left:167px;top:195px;width:12px;height:1px;background:#000;"></div>
<div class="r" style="left:165px;top:197px;width:1px;height:1px;background:#000;"></div>
<div class="r" style="left:167px;top:197px;width:12px;height:1px;background:#000;"></div>
<div class="r" style="left:165px;top:199px;width:1px;height:1px;background:#000;"></div>
<div class="r" style="left:167px;top:199px;width:12px;height:1px;background:#000;"></div>
<div class="r" style="left:165px;top:201px;width:1px;height:1px;background:#000;"></div>
<div class="r" style="left:167px;top:201px;width:12px;height:1px;background:#000;"></div>
<div class="r" style="left:165px;top:203px;width:1px;height:1px;background:#000;"></div>
<div class="r" style="left:167px;top:203px;width:12px;height:1px;background:#000;"></div>
<div class="r" style="left:165px;top:216px;width:1px;height:1px;background:#000;"></div>
<div class="r" style="left:167px;top:216px;width:12px;height:1px;background:#000;"></div>
<div class="r" style="left:165px;top:218px;width:1px;height:1px;background:#000;"></div>
<div class="r" style="left:167px;top:218px;width:12px;height:1px;background:#000;"></div>
<div class="r" style="left:165px;top:220px;width:1px;height:1px;background:#000;"></div>
<div class="r" style="left:167px;top:220px;width:12px;height:1px;background:#000;"></div>
<div class="r" style="left:165px;top:222px;width:1px;height:1px;background:#000;"></div>
<div class="r" style="left:167px;top:222px;width:12px;height:1px;background:#000;"></div>
<div class="r" style="left:165px;top:224px;width:1px;height:1px;background:#000;"></div>
<div class="r" style="left:167px;top:224px;width:12px;height:1px;background:#000;"></div>
<div class="t" style="left:533px;top:194px;font-size:12px;color:#000;"><span class="s" style="transform:scaleX(0.987)">Allgemein</span></div>
<div class="t" style="left:891px;top:194px;font-size:12px;color:#000;"><span class="s" style="transform:scaleX(0.909)">Adresse</span></div>
<div class="t" style="left:1436px;top:194px;font-size:12px;color:#000;">Kontaktdaten</div>
<div class="t" style="left:186px;top:215px;font-size:12px;color:#000;"><span class="s" style="transform:scaleX(0.978)">Art</span></div>
<div class="t" style="left:209px;top:215px;font-size:12px;color:#000;"><span class="s" style="transform:scaleX(0.951)">Kurzname</span></div>
<div class="t" style="left:371px;top:215px;font-size:12px;color:#000;"><span class="s" style="transform:scaleX(0.946)">Firma</span></div>
<div class="t" style="left:499px;top:215px;font-size:12px;color:#000;"><span class="s" style="transform:scaleX(0.939)">Geschäftsstelle</span></div>
<div class="t" style="left:627px;top:215px;font-size:12px;color:#000;"><span class="s" style="transform:scaleX(0.969)">Ansprechpartner</span></div>
<div class="t" style="left:755px;top:215px;font-size:12px;color:#000;"><span class="s" style="transform:scaleX(0.889)">Straße</span></div>
<div class="t" style="left:883px;top:215px;font-size:12px;color:#000;"><span class="s" style="transform:scaleX(0.818)">PLZ</span></div>
<div class="t" style="left:947px;top:215px;font-size:12px;color:#000;"><span class="s" style="transform:scaleX(1.020)">Ort</span></div>
<div class="t" style="left:1075px;top:215px;font-size:12px;color:#000;"><span class="s" style="transform:scaleX(0.976)">eMail</span></div>
<div class="t" style="left:1267px;top:215px;font-size:12px;color:#000;"><span class="s" style="transform:scaleX(0.954)">Geschäftlich</span></div>
<div class="t" style="left:1371px;top:215px;font-size:12px;color:#000;"><span class="s" style="transform:scaleX(1.046)">Mobil</span></div>
<div class="t" style="left:1475px;top:215px;font-size:12px;color:#000;"><span class="s" style="transform:scaleX(0.929)">Fax Geschäftlich</span></div>
<div class="t" style="left:1579px;top:215px;font-size:12px;color:#000;"><span class="s" style="transform:scaleX(0.979)">Url</span></div>
<div class="t" style="left:1771px;top:215px;font-size:12px;color:#000;"><span class="s" style="transform:scaleX(0.945)">Privat</span></div>
<div class="r" style="left:205px;top:210px;width:1px;height:80px;background:#dadada;"></div>
<div class="r" style="left:495px;top:210px;width:1px;height:80px;background:#dadada;"></div>
<div class="r" style="left:623px;top:210px;width:1px;height:80px;background:#dadada;"></div>
<div class="r" style="left:751px;top:189px;width:1px;height:101px;background:#dadada;"></div>
<div class="r" style="left:879px;top:210px;width:1px;height:80px;background:#dadada;"></div>
<div class="r" style="left:943px;top:210px;width:1px;height:80px;background:#dadada;"></div>
<div class="r" style="left:1071px;top:189px;width:1px;height:101px;background:#dadada;"></div>
<div class="r" style="left:1263px;top:210px;width:1px;height:80px;background:#dadada;"></div>
<div class="r" style="left:1367px;top:210px;width:1px;height:80px;background:#dadada;"></div>
<div class="r" style="left:1471px;top:210px;width:1px;height:80px;background:#dadada;"></div>
<div class="r" style="left:1575px;top:210px;width:1px;height:80px;background:#dadada;"></div>
<div class="r" style="left:1767px;top:210px;width:1px;height:80px;background:#dadada;"></div>
<div class="r" style="left:1871px;top:231px;width:1px;height:59px;background:#dadada;"></div>
<div class="r" style="left:366px;top:189px;width:2px;height:101px;background:#000;"></div>
<div class="r" style="left:182px;top:250px;width:1690px;height:1px;background:#dadada;"></div>
<div class="r" style="left:182px;top:270px;width:1690px;height:1px;background:#b0e0fc;"></div>
<div class="t" style="left:184px;top:235px;width:21px;overflow:hidden;color:#000;height:14px"><span class="s" style="transform:scaleX(0.857)">G</span></div>
<div class="t" style="left:208px;top:235px;width:158px;overflow:hidden;color:#000;height:14px"><span class="s" style="transform:scaleX(0.982)">Muster</span></div>
<div class="t" style="left:370px;top:235px;width:125px;overflow:hidden;color:#000;height:14px"><span class="s" style="transform:scaleX(0.991)">Manfred Mustermann</span></div>
<div class="t" style="left:498px;top:235px;width:125px;overflow:hidden;color:#000;height:14px"><span class="s" style="transform:scaleX(0.973)">Musterhausen</span></div>
<div class="t" style="left:754px;top:235px;width:125px;overflow:hidden;color:#000;height:14px"><span class="s" style="transform:scaleX(0.939)">Musterstraße 12</span></div>
<div class="t" style="left:882px;top:235px;width:61px;overflow:hidden;color:#000;height:14px"><span class="s" style="transform:scaleX(0.899)">12345</span></div>
<div class="t" style="left:946px;top:235px;width:125px;overflow:hidden;color:#000;height:14px"><span class="s" style="transform:scaleX(0.973)">Musterhausen</span></div>
<div class="t" style="left:1074px;top:235px;width:189px;overflow:hidden;color:#000;height:14px"><span class="s" style="transform:scaleX(0.969)">mm@mustermann.de</span></div>
<div class="t" style="left:1266px;top:235px;width:101px;overflow:hidden;color:#000;height:14px"><span class="s" style="transform:scaleX(0.904)">000-987654322</span></div>
<div class="t" style="left:1474px;top:235px;width:101px;overflow:hidden;color:#000;height:14px"><span class="s" style="transform:scaleX(0.904)">000-987654321</span></div>
<div class="t" style="left:184px;top:255px;width:21px;overflow:hidden;color:#000;height:14px"><span class="s" style="transform:scaleX(0.857)">G</span></div>
<div class="t" style="left:208px;top:255px;width:158px;overflow:hidden;color:#000;height:14px"><span class="s" style="transform:scaleX(0.994)">Musterfrau</span></div>
<div class="t" style="left:370px;top:255px;width:125px;overflow:hidden;color:#000;height:14px"><span class="s" style="transform:scaleX(0.982)">Ina Musterfrau</span></div>
<div class="t" style="left:498px;top:255px;width:125px;overflow:hidden;color:#000;height:14px"><span class="s" style="transform:scaleX(0.989)">Musterberg</span></div>
<div class="t" style="left:754px;top:255px;width:125px;overflow:hidden;color:#000;height:14px"><span class="s" style="transform:scaleX(0.953)">Musterallee 17</span></div>
<div class="t" style="left:882px;top:255px;width:61px;overflow:hidden;color:#000;height:14px"><span class="s" style="transform:scaleX(0.899)">54321</span></div>
<div class="t" style="left:946px;top:255px;width:125px;overflow:hidden;color:#000;height:14px"><span class="s" style="transform:scaleX(0.989)">Musterberg</span></div>
<div class="t" style="left:1074px;top:255px;width:189px;overflow:hidden;color:#000;height:14px"><span class="s" style="transform:scaleX(0.988)">info@mstf.de</span></div>
<div class="t" style="left:1266px;top:255px;width:101px;overflow:hidden;color:#000;height:14px"><span class="s" style="transform:scaleX(0.905)">000-6666667</span></div>
<div class="t" style="left:1474px;top:255px;width:101px;overflow:hidden;color:#000;height:14px"><span class="s" style="transform:scaleX(0.904)">000-87654321</span></div>
<div class="r" style="left:182px;top:271px;width:1689px;height:19px;background:#0078d7;"></div>
<div class="t" style="left:184px;top:275px;width:21px;overflow:hidden;color:#fff;height:14px"><span class="s" style="transform:scaleX(0.857)">G</span></div>
<div class="t" style="left:208px;top:275px;width:158px;overflow:hidden;color:#fff;height:14px"><span class="s" style="transform:scaleX(0.835)">SOFTTECH</span></div>
<div class="t" style="left:370px;top:275px;width:125px;overflow:hidden;color:#fff;height:14px"><span class="s" style="transform:scaleX(0.877)">SOFTTECH GmbH</span></div>
<div class="t" style="left:498px;top:275px;width:125px;overflow:hidden;color:#fff;height:14px">Neustadt</div>
<div class="t" style="left:754px;top:275px;width:125px;overflow:hidden;color:#fff;height:14px"><span class="s" style="transform:scaleX(0.950)">Maximilianstraße 39</span></div>
<div class="t" style="left:882px;top:275px;width:61px;overflow:hidden;color:#fff;height:14px"><span class="s" style="transform:scaleX(0.899)">67433</span></div>
<div class="t" style="left:946px;top:275px;width:125px;overflow:hidden;color:#fff;height:14px"><span class="s" style="transform:scaleX(0.978)">Neustadt/Weinstraße</span></div>
<div class="t" style="left:1074px;top:275px;width:189px;overflow:hidden;color:#fff;height:14px"><span class="s" style="transform:scaleX(0.979)">Info@softtech.de</span></div>
<div class="t" style="left:1266px;top:275px;width:101px;overflow:hidden;color:#fff;height:14px"><span class="s" style="transform:scaleX(0.930)">+49 63 21 / 9 39 -0</span></div>
<div class="t" style="left:1474px;top:275px;width:101px;overflow:hidden;color:#fff;height:14px"><span class="s" style="transform:scaleX(0.928)">+49 63 21 / 9 39 -19</span></div>
<div class="r" style="left:205px;top:271px;width:1px;height:19px;background:#a3dcfc;"></div>
<div class="r" style="left:495px;top:271px;width:1px;height:19px;background:#a3dcfc;"></div>
<div class="r" style="left:623px;top:271px;width:1px;height:19px;background:#a3dcfc;"></div>
<div class="r" style="left:751px;top:271px;width:1px;height:19px;background:#a3dcfc;"></div>
<div class="r" style="left:879px;top:271px;width:1px;height:19px;background:#a3dcfc;"></div>
<div class="r" style="left:943px;top:271px;width:1px;height:19px;background:#a3dcfc;"></div>
<div class="r" style="left:1071px;top:271px;width:1px;height:19px;background:#a3dcfc;"></div>
<div class="r" style="left:1263px;top:271px;width:1px;height:19px;background:#a3dcfc;"></div>
<div class="r" style="left:1367px;top:271px;width:1px;height:19px;background:#a3dcfc;"></div>
<div class="r" style="left:1471px;top:271px;width:1px;height:19px;background:#a3dcfc;"></div>
<div class="r" style="left:1575px;top:271px;width:1px;height:19px;background:#a3dcfc;"></div>
<div class="r" style="left:1767px;top:271px;width:1px;height:19px;background:#a3dcfc;"></div>
<div class="r" style="left:366px;top:271px;width:2px;height:19px;background:#000;"></div>
<div class="r" style="left:1871px;top:271px;width:1px;height:19px;background:#fff;"></div>
<div class="r" style="left:162px;top:291px;width:19px;height:726px;background:#fff;"></div>
<div class="t" style="left:168px;top:443px;font-size:10px;color:#000;font-weight:bold;">&#x2733;</div>
<div class="r" style="left:204px;top:330px;width:1690px;height:228px;background:#fff;border:1px solid #d9d9d9;box-sizing:border-box;"></div>
<div class="r" style="left:204px;top:308px;width:71px;height:24px;background:#fff;border:1px solid #d9d9d9;box-sizing:border-box;border-bottom:none;"></div>
<div class="t" style="left:212px;top:313px;font-size:12px;color:#000;"><span class="s" style="transform:scaleX(0.987)">Allgemein</span></div>
<div class="r" style="left:274px;top:310px;width:40px;height:21px;background:#f0f0f0;border:1px solid #d9d9d9;box-sizing:border-box;"></div>
<div class="t" style="left:278px;top:315px;font-size:12px;color:#000;"><span class="s" style="transform:scaleX(0.946)">Firma</span></div>
<div class="r" style="left:313px;top:310px;width:54px;height:21px;background:#f0f0f0;border:1px solid #d9d9d9;box-sizing:border-box;"></div>
<div class="t" style="left:320px;top:315px;font-size:12px;color:#000;"><span class="s" style="transform:scaleX(0.909)">Adresse</span></div>
<div class="r" style="left:366px;top:310px;width:84px;height:21px;background:#f0f0f0;border:1px solid #d9d9d9;box-sizing:border-box;"></div>
<div class="t" style="left:373px;top:315px;font-size:12px;color:#000;">Kontaktdaten</div>
<div class="r" style="left:449px;top:310px;width:113px;height:21px;background:#f0f0f0;border:1px solid #d9d9d9;box-sizing:border-box;"></div>
<div class="t" style="left:456px;top:315px;font-size:12px;color:#000;">Bankverbindungen</div>
<div class="r" style="left:561px;top:310px;width:104px;height:21px;background:#f0f0f0;border:1px solid #d9d9d9;box-sizing:border-box;"></div>
<div class="t" style="left:568px;top:315px;font-size:12px;color:#000;"><span class="s" style="transform:scaleX(0.943)">Rechnungswesen</span></div>
<div class="r" style="left:205px;top:330px;width:68px;height:2px;background:#fff;"></div>
<div class="r" style="left:220px;top:346px;width:369px;height:23px;background:#99d1ff;"></div>
<div class="r" style="left:316px;top:348px;width:271px;height:19px;background:#fff;"></div>
<div class="r" style="left:222px;top:348px;width:365px;height:19px;box-sizing:border-box;border:1px dotted #000;"></div>
<div class="r" style="left:317px;top:350px;width:58px;height:15px;background:#0078d7;"></div>
<div class="t" style="left:223px;top:352px;font-size:12px;color:#000;"><span class="s" style="transform:scaleX(0.951)">Kurzname</span></div>
<div class="t" style="left:318px;top:352px;font-size:12px;color:#fff;"><span class="s" style="transform:scaleX(0.860)">SOFTTECH</span></div>
<div class="t" style="left:223px;top:382px;font-size:12px;color:#000;"><span class="s" style="transform:scaleX(0.946)">Firma</span></div>
<div class="t" style="left:318px;top:382px;font-size:12px;color:#000;"><span class="s" style="transform:scaleX(0.910)">SOFTTECH GmbH</span></div>
<div class="t" style="left:223px;top:412px;font-size:12px;color:#000;"><span class="s" style="transform:scaleX(0.939)">Geschäftsstelle</span></div>
<div class="t" style="left:318px;top:412px;font-size:12px;color:#000;">Neustadt</div>
<div class="t" style="left:223px;top:442px;font-size:12px;color:#000;"><span class="s" style="transform:scaleX(0.969)">Ansprechpartner</span></div>
<div class="t" style="left:223px;top:471px;font-size:12px;color:#000;"><span class="s" style="transform:scaleX(0.977)">gesperrt</span></div>
<div class="r" style="left:349px;top:470px;width:13px;height:13px;background:#fff;border:1px solid #333;box-sizing:border-box;"></div>
<div class="r" style="left:201px;top:578px;width:1698px;height:2px;background:#8a8a8a;height:1px;border-bottom:1px solid #e0e0e0;box-sizing:content-box;"></div>
<div class="r" style="left:1734px;top:590px;width:75px;height:21px;background:#cccccc;border:1px solid #bfbfbf;box-sizing:border-box;"></div>
<div class="t" style="left:1737px;top:595px;font-size:12px;color:#a3a3a3;"><span class="s" style="transform:scaleX(0.980)">Übernehmen</span></div>
<div class="r" style="left:1826px;top:590px;width:74px;height:21px;background:#e1e1e1;border:1px solid #adadad;box-sizing:border-box;"></div>
<div class="t" style="left:1840px;top:595px;font-size:12px;color:#000;"><span class="s" style="transform:scaleX(0.984)">Abbruch</span></div>
<div class="r" style="left:162px;top:622px;width:1756px;height:375px;background:#fff;"></div>
<div class="r" style="left:181px;top:622px;width:1737px;height:1px;background:#dcdcdc;"></div>
<div class="r" style="left:181px;top:622px;width:1px;height:375px;background:#e8e8e8;"></div>
<div class="t" style="left:184px;top:627px;width:21px;overflow:hidden;color:#000;height:14px"><span class="s" style="transform:scaleX(0.857)">G</span></div>
<div class="t" style="left:208px;top:627px;width:158px;overflow:hidden;color:#000;height:14px"><span class="s" style="transform:scaleX(0.980)">Plotter</span></div>
<div class="t" style="left:370px;top:627px;width:125px;overflow:hidden;color:#000;height:14px"><span class="s" style="transform:scaleX(0.964)">Die Plotter</span></div>
<div class="t" style="left:498px;top:627px;width:125px;overflow:hidden;color:#000;height:14px"><span class="s" style="transform:scaleX(0.964)">Die Plotter</span></div>
<div class="t" style="left:754px;top:627px;width:125px;overflow:hidden;color:#000;height:14px"><span class="s" style="transform:scaleX(0.941)">Plottstraße 1</span></div>
<div class="t" style="left:882px;top:627px;width:61px;overflow:hidden;color:#000;height:14px"><span class="s" style="transform:scaleX(0.899)">45678</span></div>
<div class="t" style="left:946px;top:627px;width:125px;overflow:hidden;color:#000;height:14px"><span class="s" style="transform:scaleX(0.992)">Großformatingen</span></div>
<div class="t" style="left:1074px;top:627px;width:189px;overflow:hidden;color:#000;height:14px"><span class="s" style="transform:scaleX(0.955)">email@mail.de</span></div>
<div class="r" style="left:182px;top:642px;width:1690px;height:1px;background:#dadada;"></div>
<div class="t" style="left:184px;top:647px;width:21px;overflow:hidden;color:#000;height:14px"><span class="s" style="transform:scaleX(0.857)">G</span></div>
<div class="t" style="left:208px;top:647px;width:158px;overflow:hidden;color:#000;height:14px"><span class="s" style="transform:scaleX(0.965)">Gartenbauer</span></div>
<div class="t" style="left:370px;top:647px;width:125px;overflow:hidden;color:#000;height:14px"><span class="s" style="transform:scaleX(0.965)">Gartenbauer</span></div>
<div class="t" style="left:498px;top:647px;width:125px;overflow:hidden;color:#000;height:14px"><span class="s" style="transform:scaleX(0.965)">Gartenbauer</span></div>
<div class="t" style="left:626px;top:647px;width:125px;overflow:hidden;color:#000;height:14px"><span class="s" style="transform:scaleX(0.950)">Herr Gartner</span></div>
<div class="t" style="left:754px;top:647px;width:125px;overflow:hidden;color:#000;height:14px"><span class="s" style="transform:scaleX(0.929)">Gartenstraße 1</span></div>
<div class="t" style="left:882px;top:647px;width:61px;overflow:hidden;color:#000;height:14px"><span class="s" style="transform:scaleX(0.899)">12345</span></div>
<div class="t" style="left:946px;top:647px;width:125px;overflow:hidden;color:#000;height:14px"><span class="s" style="transform:scaleX(0.973)">Gartenstadt</span></div>
<div class="t" style="left:1074px;top:647px;width:189px;overflow:hidden;color:#000;height:14px"><span class="s" style="transform:scaleX(0.955)">email@mail.de</span></div>
<div class="r" style="left:182px;top:662px;width:1690px;height:1px;background:#dadada;"></div>
<div class="t" style="left:184px;top:667px;width:21px;overflow:hidden;color:#000;height:14px"><span class="s" style="transform:scaleX(0.857)">G</span></div>
<div class="t" style="left:208px;top:667px;width:158px;overflow:hidden;color:#000;height:14px"><span class="s" style="transform:scaleX(0.948)">Baum Fritz</span></div>
<div class="t" style="left:370px;top:667px;width:125px;overflow:hidden;color:#000;height:14px"><span class="s" style="transform:scaleX(0.948)">Baum Fritz</span></div>
<div class="t" style="left:498px;top:667px;width:125px;overflow:hidden;color:#000;height:14px"><span class="s" style="transform:scaleX(0.948)">Baum Fritz</span></div>
<div class="t" style="left:754px;top:667px;width:125px;overflow:hidden;color:#000;height:14px"><span class="s" style="transform:scaleX(0.929)">Baumstraße 1</span></div>
<div class="t" style="left:882px;top:667px;width:61px;overflow:hidden;color:#000;height:14px"><span class="s" style="transform:scaleX(0.899)">12345</span></div>
<div class="t" style="left:946px;top:667px;width:125px;overflow:hidden;color:#000;height:14px"><span class="s" style="transform:scaleX(0.962)">Baumhausen</span></div>
<div class="t" style="left:1074px;top:667px;width:189px;overflow:hidden;color:#000;height:14px"><span class="s" style="transform:scaleX(0.955)">email@mail.de</span></div>
<div class="r" style="left:182px;top:682px;width:1690px;height:1px;background:#dadada;"></div>
<div class="t" style="left:184px;top:687px;width:21px;overflow:hidden;color:#000;height:14px"><span class="s" style="transform:scaleX(0.857)">G</span></div>
<div class="t" style="left:208px;top:687px;width:158px;overflow:hidden;color:#000;height:14px"><span class="s" style="transform:scaleX(0.954)">Mauer Bau</span></div>
<div class="t" style="left:370px;top:687px;width:125px;overflow:hidden;color:#000;height:14px"><span class="s" style="transform:scaleX(0.954)">Mauer Bau</span></div>
<div class="t" style="left:498px;top:687px;width:125px;overflow:hidden;color:#000;height:14px"><span class="s" style="transform:scaleX(0.954)">Mauer Bau</span></div>
<div class="t" style="left:754px;top:687px;width:125px;overflow:hidden;color:#000;height:14px"><span class="s" style="transform:scaleX(0.936)">Mauerstraße 1</span></div>
<div class="t" style="left:882px;top:687px;width:61px;overflow:hidden;color:#000;height:14px"><span class="s" style="transform:scaleX(0.899)">12345</span></div>
<div class="t" style="left:946px;top:687px;width:125px;overflow:hidden;color:#000;height:14px"><span class="s" style="transform:scaleX(0.983)">Mauerstadt</span></div>
<div class="t" style="left:1074px;top:687px;width:189px;overflow:hidden;color:#000;height:14px"><span class="s" style="transform:scaleX(0.955)">email@mail.de</span></div>
<div class="r" style="left:182px;top:702px;width:1690px;height:1px;background:#dadada;"></div>
<div class="t" style="left:184px;top:707px;width:21px;overflow:hidden;color:#000;height:14px"><span class="s" style="transform:scaleX(0.857)">G</span></div>
<div class="t" style="left:208px;top:707px;width:158px;overflow:hidden;color:#000;height:14px"><span class="s" style="transform:scaleX(0.962)">Boll Bau</span></div>
<div class="t" style="left:370px;top:707px;width:125px;overflow:hidden;color:#000;height:14px"><span class="s" style="transform:scaleX(0.962)">Boll Bau</span></div>
<div class="t" style="left:498px;top:707px;width:125px;overflow:hidden;color:#000;height:14px"><span class="s" style="transform:scaleX(0.962)">Boll Bau</span></div>
<div class="t" style="left:754px;top:707px;width:125px;overflow:hidden;color:#000;height:14px"><span class="s" style="transform:scaleX(0.925)">Bollstraßße 1</span></div>
<div class="t" style="left:882px;top:707px;width:61px;overflow:hidden;color:#000;height:14px"><span class="s" style="transform:scaleX(0.899)">23456</span></div>
<div class="t" style="left:946px;top:707px;width:125px;overflow:hidden;color:#000;height:14px">Bollstadt</div>
<div class="t" style="left:1074px;top:707px;width:189px;overflow:hidden;color:#000;height:14px"><span class="s" style="transform:scaleX(0.955)">email@mail.de</span></div>
<div class="r" style="left:182px;top:722px;width:1690px;height:1px;background:#dadada;"></div>
<div class="t" style="left:184px;top:727px;width:21px;overflow:hidden;color:#000;height:14px"><span class="s" style="transform:scaleX(0.857)">G</span></div>
<div class="t" style="left:208px;top:727px;width:158px;overflow:hidden;color:#000;height:14px"><span class="s" style="transform:scaleX(0.943)">Singer Bau</span></div>
<div class="t" style="left:370px;top:727px;width:125px;overflow:hidden;color:#000;height:14px"><span class="s" style="transform:scaleX(0.943)">Singer Bau</span></div>
<div class="t" style="left:498px;top:727px;width:125px;overflow:hidden;color:#000;height:14px"><span class="s" style="transform:scaleX(0.943)">Singer Bau</span></div>
<div class="t" style="left:754px;top:727px;width:125px;overflow:hidden;color:#000;height:14px"><span class="s" style="transform:scaleX(0.928)">Singerstraße 1</span></div>
<div class="t" style="left:882px;top:727px;width:61px;overflow:hidden;color:#000;height:14px"><span class="s" style="transform:scaleX(0.899)">12345</span></div>
<div class="t" style="left:946px;top:727px;width:125px;overflow:hidden;color:#000;height:14px"><span class="s" style="transform:scaleX(0.962)">Singhausen</span></div>
<div class="t" style="left:1074px;top:727px;width:189px;overflow:hidden;color:#000;height:14px"><span class="s" style="transform:scaleX(0.955)">email@mail.de</span></div>
<div class="r" style="left:182px;top:742px;width:1690px;height:1px;background:#dadada;"></div>
<div class="t" style="left:184px;top:747px;width:21px;overflow:hidden;color:#000;height:14px"><span class="s" style="transform:scaleX(0.857)">G</span></div>
<div class="t" style="left:208px;top:747px;width:158px;overflow:hidden;color:#000;height:14px"><span class="s" style="transform:scaleX(0.967)">Wall Bau</span></div>
<div class="t" style="left:370px;top:747px;width:125px;overflow:hidden;color:#000;height:14px"><span class="s" style="transform:scaleX(0.967)">Wall Bau</span></div>
<div class="t" style="left:498px;top:747px;width:125px;overflow:hidden;color:#000;height:14px"><span class="s" style="transform:scaleX(0.967)">Wall Bau</span></div>
<div class="t" style="left:754px;top:747px;width:125px;overflow:hidden;color:#000;height:14px"><span class="s" style="transform:scaleX(0.942)">Wallstraße 1</span></div>
<div class="t" style="left:882px;top:747px;width:61px;overflow:hidden;color:#000;height:14px"><span class="s" style="transform:scaleX(0.899)">23456</span></div>
<div class="t" style="left:946px;top:747px;width:125px;overflow:hidden;color:#000;height:14px">Wallheim</div>
<div class="t" style="left:1074px;top:747px;width:189px;overflow:hidden;color:#000;height:14px"><span class="s" style="transform:scaleX(0.955)">email@mail.de</span></div>
<div class="r" style="left:182px;top:762px;width:1690px;height:1px;background:#dadada;"></div>
<div class="t" style="left:184px;top:767px;width:21px;overflow:hidden;color:#000;height:14px"><span class="s" style="transform:scaleX(0.857)">G</span></div>
<div class="t" style="left:208px;top:767px;width:158px;overflow:hidden;color:#000;height:14px"><span class="s" style="transform:scaleX(0.923)">Dach Decker</span></div>
<div class="t" style="left:370px;top:767px;width:125px;overflow:hidden;color:#000;height:14px"><span class="s" style="transform:scaleX(0.923)">Dach Decker</span></div>
<div class="t" style="left:498px;top:767px;width:125px;overflow:hidden;color:#000;height:14px"><span class="s" style="transform:scaleX(0.923)">Dach Decker</span></div>
<div class="t" style="left:754px;top:767px;width:125px;overflow:hidden;color:#000;height:14px"><span class="s" style="transform:scaleX(0.939)">Ziegelstraße 1</span></div>
<div class="t" style="left:882px;top:767px;width:61px;overflow:hidden;color:#000;height:14px"><span class="s" style="transform:scaleX(0.899)">12345</span></div>
<div class="t" style="left:946px;top:767px;width:125px;overflow:hidden;color:#000;height:14px"><span class="s" style="transform:scaleX(0.962)">Dachstadt</span></div>
<div class="t" style="left:1074px;top:767px;width:189px;overflow:hidden;color:#000;height:14px"><span class="s" style="transform:scaleX(0.955)">email@mail.de</span></div>
<div class="r" style="left:182px;top:782px;width:1690px;height:1px;background:#dadada;"></div>
<div class="t" style="left:184px;top:787px;width:21px;overflow:hidden;color:#000;height:14px"><span class="s" style="transform:scaleX(0.857)">G</span></div>
<div class="t" style="left:208px;top:787px;width:158px;overflow:hidden;color:#000;height:14px"><span class="s" style="transform:scaleX(0.981)">Ziegler</span></div>
<div class="t" style="left:370px;top:787px;width:125px;overflow:hidden;color:#000;height:14px"><span class="s" style="transform:scaleX(0.968)">Pfannen Ziegler</span></div>
<div class="t" style="left:498px;top:787px;width:125px;overflow:hidden;color:#000;height:14px"><span class="s" style="transform:scaleX(0.968)">Pfannen Ziegler</span></div>
<div class="t" style="left:754px;top:787px;width:125px;overflow:hidden;color:#000;height:14px"><span class="s" style="transform:scaleX(0.935)">Pfannenstraße 1</span></div>
<div class="t" style="left:882px;top:787px;width:61px;overflow:hidden;color:#000;height:14px"><span class="s" style="transform:scaleX(0.899)">12345</span></div>
<div class="t" style="left:946px;top:787px;width:125px;overflow:hidden;color:#000;height:14px"><span class="s" style="transform:scaleX(0.988)">Ziegelheim</span></div>
<div class="t" style="left:1074px;top:787px;width:189px;overflow:hidden;color:#000;height:14px"><span class="s" style="transform:scaleX(0.955)">email@mail.de</span></div>
<div class="r" style="left:182px;top:802px;width:1690px;height:1px;background:#dadada;"></div>
<div class="t" style="left:184px;top:807px;width:21px;overflow:hidden;color:#000;height:14px"><span class="s" style="transform:scaleX(0.857)">G</span></div>
<div class="t" style="left:208px;top:807px;width:158px;overflow:hidden;color:#000;height:14px"><span class="s" style="transform:scaleX(0.947)">Putzmeister</span></div>
<div class="t" style="left:370px;top:807px;width:125px;overflow:hidden;color:#000;height:14px"><span class="s" style="transform:scaleX(0.947)">Putzmeister</span></div>
<div class="t" style="left:498px;top:807px;width:125px;overflow:hidden;color:#000;height:14px"><span class="s" style="transform:scaleX(0.947)">Putzmeister</span></div>
<div class="t" style="left:754px;top:807px;width:125px;overflow:hidden;color:#000;height:14px"><span class="s" style="transform:scaleX(0.911)">Putzstraße 1</span></div>
<div class="t" style="left:882px;top:807px;width:61px;overflow:hidden;color:#000;height:14px"><span class="s" style="transform:scaleX(0.899)">12345</span></div>
<div class="t" style="left:946px;top:807px;width:125px;overflow:hidden;color:#000;height:14px"><span class="s" style="transform:scaleX(0.959)">Putzstadt</span></div>
<div class="t" style="left:1074px;top:807px;width:189px;overflow:hidden;color:#000;height:14px"><span class="s" style="transform:scaleX(0.955)">email@mail.de</span></div>
<div class="r" style="left:182px;top:822px;width:1690px;height:1px;background:#dadada;"></div>
<div class="t" style="left:184px;top:827px;width:21px;overflow:hidden;color:#000;height:14px"><span class="s" style="transform:scaleX(0.857)">G</span></div>
<div class="t" style="left:208px;top:827px;width:158px;overflow:hidden;color:#000;height:14px"><span class="s" style="transform:scaleX(0.878)">Reck</span></div>
<div class="t" style="left:370px;top:827px;width:125px;overflow:hidden;color:#000;height:14px"><span class="s" style="transform:scaleX(0.906)">Stuck Reck</span></div>
<div class="t" style="left:498px;top:827px;width:125px;overflow:hidden;color:#000;height:14px"><span class="s" style="transform:scaleX(0.906)">Stuck Reck</span></div>
<div class="t" style="left:754px;top:827px;width:125px;overflow:hidden;color:#000;height:14px"><span class="s" style="transform:scaleX(0.897)">Reckstraße 1</span></div>
<div class="t" style="left:882px;top:827px;width:61px;overflow:hidden;color:#000;height:14px"><span class="s" style="transform:scaleX(0.899)">23456</span></div>
<div class="t" style="left:946px;top:827px;width:125px;overflow:hidden;color:#000;height:14px"><span class="s" style="transform:scaleX(0.951)">Stuckhausen</span></div>
<div class="t" style="left:1074px;top:827px;width:189px;overflow:hidden;color:#000;height:14px"><span class="s" style="transform:scaleX(0.955)">email@mail.de</span></div>
<div class="r" style="left:182px;top:842px;width:1690px;height:1px;background:#dadada;"></div>
<div class="t" style="left:184px;top:847px;width:21px;overflow:hidden;color:#000;height:14px"><span class="s" style="transform:scaleX(0.857)">G</span></div>
<div class="t" style="left:208px;top:847px;width:158px;overflow:hidden;color:#000;height:14px"><span class="s" style="transform:scaleX(0.928)">Fassadenmacher</span></div>
<div class="t" style="left:370px;top:847px;width:125px;overflow:hidden;color:#000;height:14px"><span class="s" style="transform:scaleX(0.928)">Fassadenmacher</span></div>
<div class="t" style="left:498px;top:847px;width:125px;overflow:hidden;color:#000;height:14px"><span class="s" style="transform:scaleX(0.928)">Fassadenmacher</span></div>
<div class="t" style="left:754px;top:847px;width:125px;overflow:hidden;color:#000;height:14px"><span class="s" style="transform:scaleX(0.910)">Fassadenstraße 1</span></div>
<div class="t" style="left:882px;top:847px;width:61px;overflow:hidden;color:#000;height:14px"><span class="s" style="transform:scaleX(0.899)">34567</span></div>
<div class="t" style="left:946px;top:847px;width:125px;overflow:hidden;color:#000;height:14px"><span class="s" style="transform:scaleX(0.934)">Fassadenhausen</span></div>
<div class="t" style="left:1074px;top:847px;width:189px;overflow:hidden;color:#000;height:14px"><span class="s" style="transform:scaleX(0.955)">email@mail.de</span></div>
<div class="r" style="left:182px;top:862px;width:1690px;height:1px;background:#dadada;"></div>
<div class="t" style="left:184px;top:867px;width:21px;overflow:hidden;color:#000;height:14px"><span class="s" style="transform:scaleX(0.857)">G</span></div>
<div class="t" style="left:208px;top:867px;width:158px;overflow:hidden;color:#000;height:14px"><span class="s" style="transform:scaleX(0.948)">Fliesenleger</span></div>
<div class="t" style="left:370px;top:867px;width:125px;overflow:hidden;color:#000;height:14px"><span class="s" style="transform:scaleX(0.946)">Die Fliesenleger</span></div>
<div class="t" style="left:498px;top:867px;width:125px;overflow:hidden;color:#000;height:14px"><span class="s" style="transform:scaleX(0.946)">Die Fliesenleger</span></div>
<div class="t" style="left:754px;top:867px;width:125px;overflow:hidden;color:#000;height:14px"><span class="s" style="transform:scaleX(0.919)">Fliesenstraße 1</span></div>
<div class="t" style="left:882px;top:867px;width:61px;overflow:hidden;color:#000;height:14px"><span class="s" style="transform:scaleX(0.899)">12345</span></div>
<div class="t" style="left:946px;top:867px;width:125px;overflow:hidden;color:#000;height:14px"><span class="s" style="transform:scaleX(0.969)">Fliesingen</span></div>
<div class="t" style="left:1074px;top:867px;width:189px;overflow:hidden;color:#000;height:14px"><span class="s" style="transform:scaleX(0.955)">email@mail.de</span></div>
<div class="r" style="left:182px;top:882px;width:1690px;height:1px;background:#dadada;"></div>
<div class="t" style="left:184px;top:887px;width:21px;overflow:hidden;color:#000;height:14px"><span class="s" style="transform:scaleX(0.857)">G</span></div>
<div class="t" style="left:208px;top:887px;width:158px;overflow:hidden;color:#000;height:14px"><span class="s" style="transform:scaleX(0.942)">Plattensetzer</span></div>
<div class="t" style="left:370px;top:887px;width:125px;overflow:hidden;color:#000;height:14px"><span class="s" style="transform:scaleX(0.942)">Plattensetzer</span></div>
<div class="t" style="left:498px;top:887px;width:125px;overflow:hidden;color:#000;height:14px"><span class="s" style="transform:scaleX(0.942)">Plattensetzer</span></div>
<div class="t" style="left:754px;top:887px;width:125px;overflow:hidden;color:#000;height:14px"><span class="s" style="transform:scaleX(0.934)">Plattenstraße 1</span></div>
<div class="t" style="left:882px;top:887px;width:61px;overflow:hidden;color:#000;height:14px"><span class="s" style="transform:scaleX(0.899)">23456</span></div>
<div class="t" style="left:946px;top:887px;width:125px;overflow:hidden;color:#000;height:14px"><span class="s" style="transform:scaleX(0.978)">Plattenstadt</span></div>
<div class="t" style="left:1074px;top:887px;width:189px;overflow:hidden;color:#000;height:14px"><span class="s" style="transform:scaleX(0.955)">email@mail.de</span></div>
<div class="r" style="left:182px;top:902px;width:1690px;height:1px;background:#dadada;"></div>
<div class="t" style="left:184px;top:907px;width:21px;overflow:hidden;color:#000;height:14px"><span class="s" style="transform:scaleX(0.857)">G</span></div>
<div class="t" style="left:208px;top:907px;width:158px;overflow:hidden;color:#000;height:14px"><span class="s" style="transform:scaleX(0.957)">Haller</span></div>
<div class="t" style="left:370px;top:907px;width:125px;overflow:hidden;color:#000;height:14px"><span class="s" style="transform:scaleX(0.963)">Mosaik Haller</span></div>
<div class="t" style="left:498px;top:907px;width:125px;overflow:hidden;color:#000;height:14px"><span class="s" style="transform:scaleX(0.963)">Mosaik Haller</span></div>
<div class="t" style="left:754px;top:907px;width:125px;overflow:hidden;color:#000;height:14px"><span class="s" style="transform:scaleX(0.939)">Mosaikstraße 1</span></div>
<div class="t" style="left:882px;top:907px;width:61px;overflow:hidden;color:#000;height:14px"><span class="s" style="transform:scaleX(0.899)">23456</span></div>
<div class="t" style="left:946px;top:907px;width:125px;overflow:hidden;color:#000;height:14px"><span class="s" style="transform:scaleX(0.978)">Plattenstadt</span></div>
<div class="t" style="left:1074px;top:907px;width:189px;overflow:hidden;color:#000;height:14px"><span class="s" style="transform:scaleX(0.990)">haller@haller.info</span></div>
<div class="r" style="left:182px;top:922px;width:1690px;height:1px;background:#dadada;"></div>
<div class="t" style="left:184px;top:927px;width:21px;overflow:hidden;color:#000;height:14px"><span class="s" style="transform:scaleX(0.857)">G</span></div>
<div class="t" style="left:208px;top:927px;width:158px;overflow:hidden;color:#000;height:14px"><span class="s" style="transform:scaleX(0.926)">Tischler Franz</span></div>
<div class="t" style="left:370px;top:927px;width:125px;overflow:hidden;color:#000;height:14px"><span class="s" style="transform:scaleX(0.926)">Tischler Franz</span></div>
<div class="t" style="left:498px;top:927px;width:125px;overflow:hidden;color:#000;height:14px"><span class="s" style="transform:scaleX(0.926)">Tischler Franz</span></div>
<div class="t" style="left:754px;top:927px;width:125px;overflow:hidden;color:#000;height:14px"><span class="s" style="transform:scaleX(0.923)">Tischlerstraße 1</span></div>
<div class="t" style="left:882px;top:927px;width:61px;overflow:hidden;color:#000;height:14px"><span class="s" style="transform:scaleX(0.899)">12345</span></div>
<div class="t" style="left:946px;top:927px;width:125px;overflow:hidden;color:#000;height:14px"><span class="s" style="transform:scaleX(0.951)">Tischlerhausen</span></div>
<div class="t" style="left:1074px;top:927px;width:189px;overflow:hidden;color:#000;height:14px"><span class="s" style="transform:scaleX(0.955)">email@mail.de</span></div>
<div class="r" style="left:182px;top:942px;width:1690px;height:1px;background:#dadada;"></div>
<div class="t" style="left:184px;top:947px;width:21px;overflow:hidden;color:#000;height:14px"><span class="s" style="transform:scaleX(0.857)">G</span></div>
<div class="t" style="left:208px;top:947px;width:158px;overflow:hidden;color:#000;height:14px"><span class="s" style="transform:scaleX(0.967)">Türenbauer</span></div>
<div class="t" style="left:370px;top:947px;width:125px;overflow:hidden;color:#000;height:14px"><span class="s" style="transform:scaleX(0.967)">Türenbauer</span></div>
<div class="t" style="left:498px;top:947px;width:125px;overflow:hidden;color:#000;height:14px"><span class="s" style="transform:scaleX(0.967)">Türenbauer</span></div>
<div class="t" style="left:754px;top:947px;width:125px;overflow:hidden;color:#000;height:14px"><span class="s" style="transform:scaleX(0.929)">Türenstraße 1</span></div>
<div class="t" style="left:882px;top:947px;width:61px;overflow:hidden;color:#000;height:14px"><span class="s" style="transform:scaleX(0.899)">45678</span></div>
<div class="t" style="left:946px;top:947px;width:125px;overflow:hidden;color:#000;height:14px"><span class="s" style="transform:scaleX(0.976)">Türenheim</span></div>
<div class="t" style="left:1074px;top:947px;width:189px;overflow:hidden;color:#000;height:14px"><span class="s" style="transform:scaleX(0.955)">email@mail.de</span></div>
<div class="r" style="left:182px;top:962px;width:1690px;height:1px;background:#dadada;"></div>
<div class="t" style="left:184px;top:967px;width:21px;overflow:hidden;color:#000;height:14px"><span class="s" style="transform:scaleX(0.857)">G</span></div>
<div class="t" style="left:208px;top:967px;width:158px;overflow:hidden;color:#000;height:14px"><span class="s" style="transform:scaleX(0.907)">Eder</span></div>
<div class="t" style="left:370px;top:967px;width:125px;overflow:hidden;color:#000;height:14px"><span class="s" style="transform:scaleX(0.925)">Tischler Eder</span></div>
<div class="t" style="left:498px;top:967px;width:125px;overflow:hidden;color:#000;height:14px"><span class="s" style="transform:scaleX(0.925)">Tischler Eder</span></div>
<div class="t" style="left:754px;top:967px;width:125px;overflow:hidden;color:#000;height:14px"><span class="s" style="transform:scaleX(0.908)">Ederstraße 1</span></div>
<div class="t" style="left:882px;top:967px;width:61px;overflow:hidden;color:#000;height:14px"><span class="s" style="transform:scaleX(0.899)">12345</span></div>
<div class="t" style="left:946px;top:967px;width:125px;overflow:hidden;color:#000;height:14px"><span class="s" style="transform:scaleX(0.954)">Ederstadt</span></div>
<div class="t" style="left:1074px;top:967px;width:189px;overflow:hidden;color:#000;height:14px"><span class="s" style="transform:scaleX(0.955)">email@mail.de</span></div>
<div class="r" style="left:182px;top:982px;width:1690px;height:1px;background:#dadada;"></div>
<div class="t" style="left:184px;top:987px;width:21px;overflow:hidden;color:#000;height:10px"><span class="s" style="transform:scaleX(0.857)">G</span></div>
<div class="t" style="left:208px;top:987px;width:158px;overflow:hidden;color:#000;height:10px"><span class="s" style="transform:scaleX(0.957)">Dieler</span></div>
<div class="t" style="left:370px;top:987px;width:125px;overflow:hidden;color:#000;height:10px"><span class="s" style="transform:scaleX(0.949)">Parkett Dieler</span></div>
<div class="t" style="left:498px;top:987px;width:125px;overflow:hidden;color:#000;height:10px"><span class="s" style="transform:scaleX(0.949)">Parkett Dieler</span></div>
<div class="t" style="left:754px;top:987px;width:125px;overflow:hidden;color:#000;height:10px"><span class="s" style="transform:scaleX(0.935)">Dielenstraße 1</span></div>
<div class="t" style="left:882px;top:987px;width:61px;overflow:hidden;color:#000;height:10px"><span class="s" style="transform:scaleX(0.899)">12345</span></div>
<div class="t" style="left:946px;top:987px;width:125px;overflow:hidden;color:#000;height:10px"><span class="s" style="transform:scaleX(0.967)">Dielenhausen</span></div>
<div class="t" style="left:1074px;top:987px;width:189px;overflow:hidden;color:#000;height:10px"><span class="s" style="transform:scaleX(0.955)">email@mail.de</span></div>
<div class="r" style="left:205px;top:623px;width:1px;height:374px;background:#dadada;"></div>
<div class="r" style="left:495px;top:623px;width:1px;height:374px;background:#dadada;"></div>
<div class="r" style="left:623px;top:623px;width:1px;height:374px;background:#dadada;"></div>
<div class="r" style="left:751px;top:623px;width:1px;height:374px;background:#dadada;"></div>
<div class="r" style="left:879px;top:623px;width:1px;height:374px;background:#dadada;"></div>
<div class="r" style="left:943px;top:623px;width:1px;height:374px;background:#dadada;"></div>
<div class="r" style="left:1071px;top:623px;width:1px;height:374px;background:#dadada;"></div>
<div class="r" style="left:1263px;top:623px;width:1px;height:374px;background:#dadada;"></div>
<div class="r" style="left:1367px;top:623px;width:1px;height:374px;background:#dadada;"></div>
<div class="r" style="left:1471px;top:623px;width:1px;height:374px;background:#dadada;"></div>
<div class="r" style="left:1575px;top:623px;width:1px;height:374px;background:#dadada;"></div>
<div class="r" style="left:1767px;top:623px;width:1px;height:374px;background:#dadada;"></div>
<div class="r" style="left:1871px;top:623px;width:1px;height:374px;background:#dadada;"></div>
<div class="r" style="left:366px;top:623px;width:2px;height:374px;background:#000;"></div>
<div class="r" style="left:162px;top:997px;width:1756px;height:18px;background:#f0f0f0;"></div>
<div class="r" style="left:163px;top:998px;width:17px;height:17px;background:#e1e1e1;border:1px solid #adadad;box-sizing:border-box;"></div>
<svg class="r" style="left:163px;top:998px" width="17" height="17" viewBox="0 0 17 17"><path d="M4 5V12" stroke="#000"/><path d="M9 5V12L5 8.5Z M13 5V12L9 8.5Z" fill="#000"/></svg>
<div class="r" style="left:181px;top:998px;width:17px;height:17px;background:#e1e1e1;border:1px solid #adadad;box-sizing:border-box;"></div>
<svg class="r" style="left:181px;top:998px" width="17" height="17" viewBox="0 0 17 17"><path d="M10 5V12L6 8.5Z" fill="#000"/></svg>
<div class="r" style="left:198px;top:998px;width:42px;height:17px;background:#fff;"></div>
<div class="t" style="left:204px;top:1002px;font-size:12px;color:#000;"><span class="s" style="transform:scaleX(0.912)">3 - 61</span></div>
<div class="r" style="left:240px;top:998px;width:16px;height:17px;background:#e1e1e1;border:1px solid #adadad;box-sizing:border-box;"></div>
<svg class="r" style="left:240px;top:998px" width="16" height="17" viewBox="0 0 16 17"><path d="M6 5V12L10 8.5Z" fill="#000"/></svg>
<div class="r" style="left:258px;top:998px;width:17px;height:17px;background:#e1e1e1;border:1px solid #adadad;box-sizing:border-box;"></div>
<svg class="r" style="left:258px;top:998px" width="17" height="17" viewBox="0 0 17 17"><path d="M3 5V12L7 8.5Z M7 5V12L11 8.5Z" fill="#000"/><path d="M12.5 5V12" stroke="#000"/></svg>
<div class="r" style="left:0px;top:1016px;width:1920px;height:23px;background:#f0f0f0;"></div>
<div class="r" style="left:0px;top:1016px;width:1920px;height:1px;background:#d3d8dd;"></div>
<div class="r" style="left:0px;top:1017px;width:1920px;height:1px;background:#ffffff;"></div>
<div class="r" style="left:0px;top:1018px;width:1920px;height:1px;background:#dcdcdc;"></div>
<div class="r" style="left:0px;top:1038px;width:1920px;height:1px;background:#f8f8f8;"></div>
<div class="r" style="left:68px;top:1020px;width:1px;height:17px;background:#d5d5d5;"></div>
<div class="r" style="left:134px;top:1020px;width:1px;height:17px;background:#d5d5d5;"></div>
<div class="r" style="left:248px;top:1020px;width:1px;height:17px;background:#d5d5d5;"></div>
<div class="r" style="left:327px;top:1020px;width:1px;height:17px;background:#d5d5d5;"></div>
<div class="r" style="left:1224px;top:1020px;width:1px;height:17px;background:#d5d5d5;"></div>
<div class="r" style="left:1243px;top:1020px;width:1px;height:17px;background:#d5d5d5;"></div>
<svg class="r" style="left:0px;top:1016px" width="20" height="23" viewBox="0 0 20 23"><path d="M4 20Q4 14.5 7.5 14H11Q15 14.5 15 20Z" fill="#9a9a9a"/><ellipse cx="8" cy="10" rx="2.8" ry="3.8" fill="#e0b070"/><path d="M5.5 8Q5.5 5.5 8 5.5Q11 5.5 11 8.5L10.5 10Q10 7 8 7.5Q6 7.5 5.5 8Z" fill="#4a4236"/><path d="M7 15L6.2 20H7.8Z" fill="#111"/></svg>
<div class="t" style="left:82px;top:1023px;font-size:12px;color:#000;"><span class="s" style="transform:scaleX(0.881)">DE | EN</span></div>
<div class="r" style="left:329px;top:1021px;width:16px;height:16px;background:#fff;border:1px solid #444;box-sizing:border-box;border-top-width:2px;"></div>
<svg class="r" style="left:329px;top:1021px" width="16" height="16" viewBox="0 0 16 16"><circle cx="8" cy="8.5" r="5.8" fill="#f8f0ff" stroke="#5b2d85" stroke-width="1.1"/><rect x="7.2" y="7.2" width="1.7" height="4.8" fill="#5b2d85"/><circle cx="8" cy="5.2" r="0.9" fill="#5b2d85"/></svg>
</body></html>
